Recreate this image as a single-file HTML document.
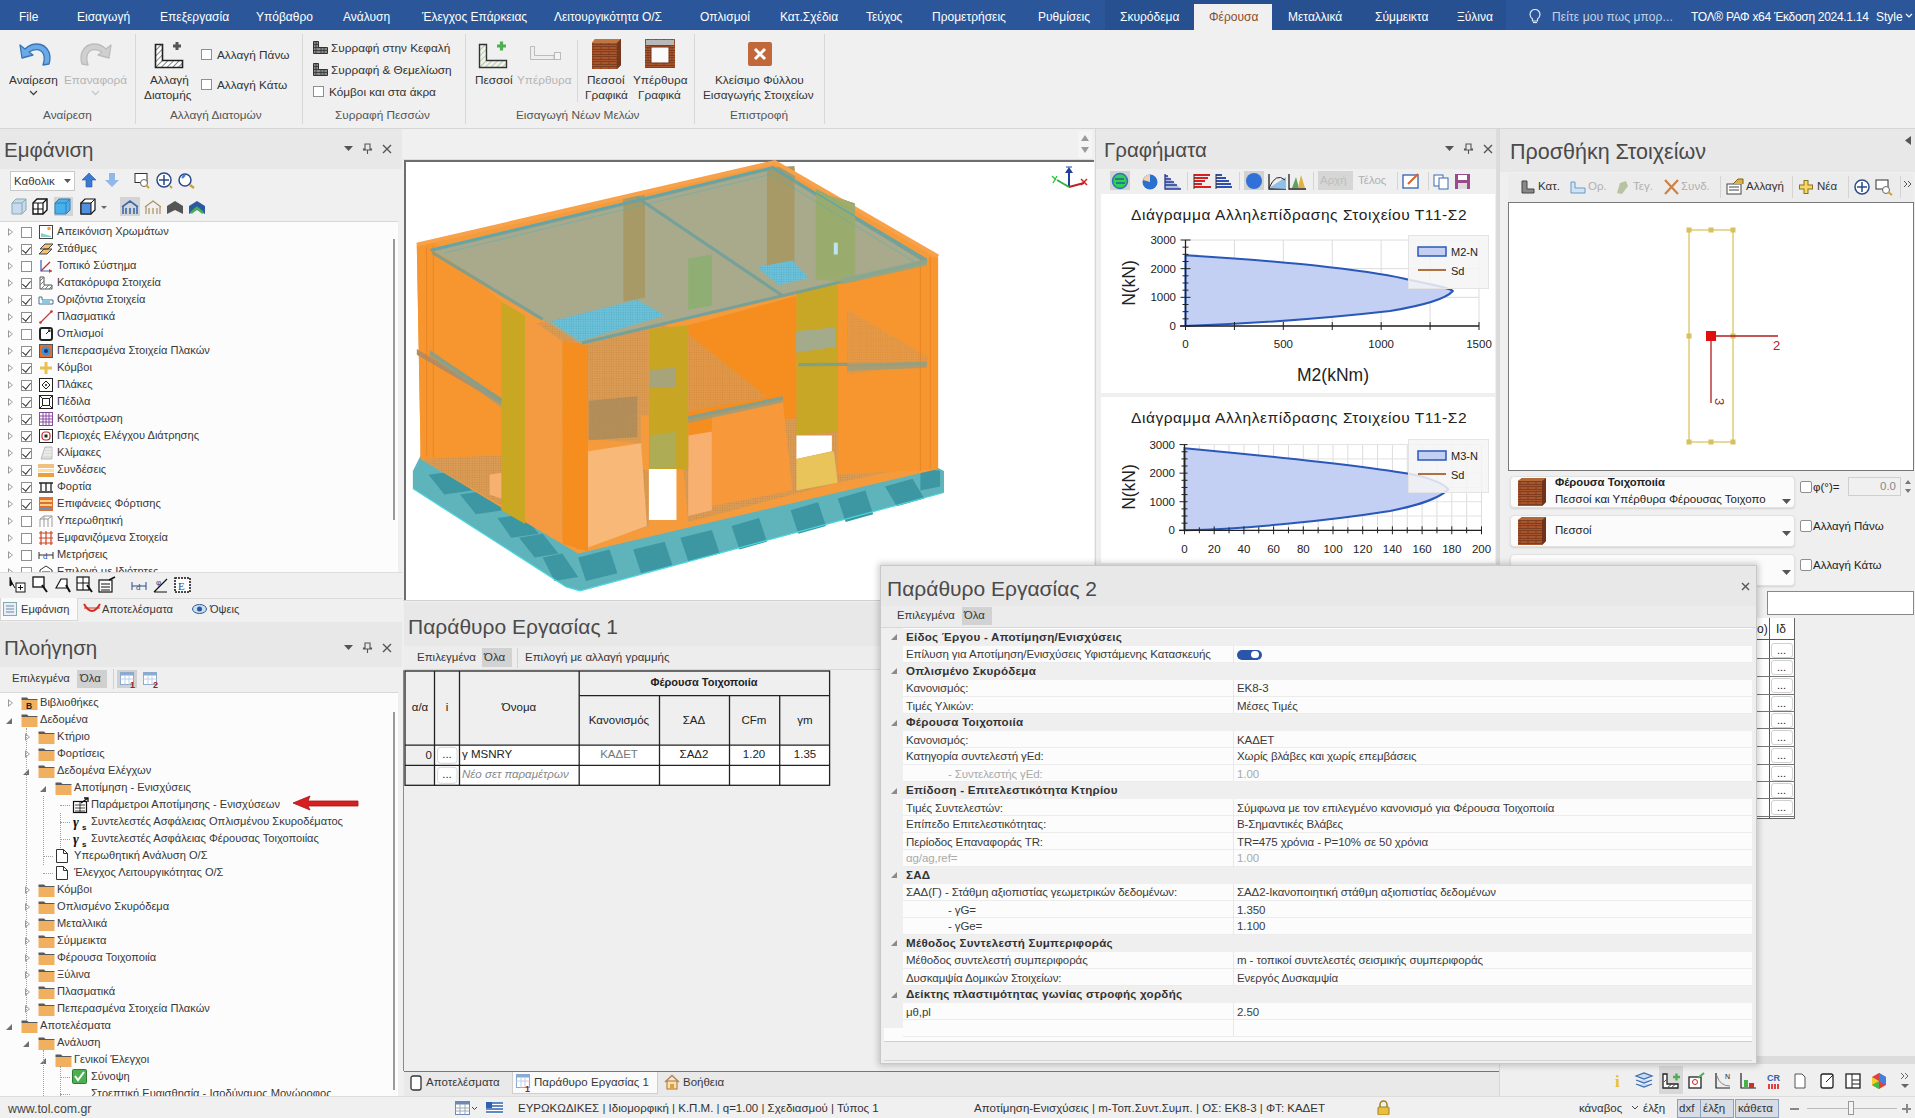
<!DOCTYPE html>
<html><head><meta charset="utf-8"><title>TOL</title>
<style>
*{margin:0;padding:0;box-sizing:border-box}
html,body{width:1915px;height:1118px;overflow:hidden;background:#f0f0f0;font-family:"Liberation Sans",sans-serif;color:#222;font-size:11px;position:relative}
.a{position:absolute}
.t{position:absolute;white-space:nowrap;line-height:1}
.menu{color:#fff;font-size:12px}
.rib{font-size:11.8px;color:#333}
.ph{background:#e8e8e8}
.ptitle{font-size:20.5px;color:#4a4a4a}
.cb{position:absolute;width:11px;height:11px;border:1px solid #8f8f8f;background:#fff}
.sep{position:absolute;width:1px;background:#d8d8d8}
.exp{position:absolute;width:0;height:0;border-top:4px solid transparent;border-bottom:4px solid transparent;border-left:5px solid #9a9a9a}
.exp:after{content:"";position:absolute;left:-4px;top:-2.5px;border-top:2.5px solid transparent;border-bottom:2.5px solid transparent;border-left:3px solid #fff}
.expd{position:absolute;width:0;height:0;border-left:6px solid transparent;border-bottom:6px solid #707070}
.tr{font-size:11.1px;color:#383838}
.ck{position:absolute;width:11px;height:11px;border:1px solid #8f8f8f;background:#fff}
.ck.on:after{content:"";position:absolute;left:2px;top:0px;width:4px;height:7px;border-right:1.5px solid #333;border-bottom:1.5px solid #333;transform:rotate(40deg)}
.ico{position:absolute;width:16px;height:16px}
.hic{position:absolute;font-size:13px;color:#555}

</style></head><body>
<!-- blue menu bar -->
<div class="a" style="left:0;top:0;width:1915px;height:30px;background:#2b579a"></div>
<div class="a" style="left:1105px;top:0;width:401px;height:30px;background:#26508f"></div>
<div class="a" style="left:1194px;top:4px;width:78px;height:27px;background:#f0f0f0"></div>
<div class="t menu" style="left:19px;top:11px">File</div>
<div class="t menu" style="left:77px;top:11px">Εισαγωγή</div>
<div class="t menu" style="left:160px;top:11px">Επεξεργασία</div>
<div class="t menu" style="left:256px;top:11px">Υπόβαθρο</div>
<div class="t menu" style="left:343px;top:11px">Ανάλυση</div>
<div class="t menu" style="left:422px;top:11px">Έλεγχος Επάρκειας</div>
<div class="t menu" style="left:554px;top:11px">Λειτουργικότητα Ο/Σ</div>
<div class="t menu" style="left:700px;top:11px">Οπλισμοί</div>
<div class="t menu" style="left:780px;top:11px">Κατ.Σχέδια</div>
<div class="t menu" style="left:866px;top:11px">Τεύχος</div>
<div class="t menu" style="left:932px;top:11px">Προμετρήσεις</div>
<div class="t menu" style="left:1038px;top:11px">Ρυθμίσεις</div>
<div class="t menu" style="left:1120px;top:11px">Σκυρόδεμα</div>
<div class="t menu" style="left:1209px;top:11px;color:#8a4b2a">Φέρουσα</div>
<div class="t menu" style="left:1288px;top:11px">Μεταλλικά</div>
<div class="t menu" style="left:1375px;top:11px">Σύμμεικτα</div>
<div class="t menu" style="left:1457px;top:11px">Ξύλινα</div>
<div class="t menu" style="left:1552px;top:11px;color:#c5d2e6;letter-spacing:0.1px">Πείτε μου πως μπορ...</div>
<svg class="a" style="left:1529px;top:9px" width="12" height="15" viewBox="0 0 12 15"><path d="M3.5 10 Q1 8 1 5.5 A5 5 0 0 1 11 5.5 Q11 8 8.5 10 V12 H3.5Z" fill="none" stroke="#dfe6f0" stroke-width="1.2"/><path d="M4 13.5 H8" stroke="#dfe6f0" stroke-width="1.2"/></svg>
<svg class="a" style="left:1905px;top:13px" width="8" height="6"><path d="M1 1 L4 4 L7 1" stroke="#fff" fill="none" stroke-width="1.2"/></svg>
<div class="t menu" style="left:1691px;top:11px;letter-spacing:-0.3px">ΤΟΛ® ΡΑΦ x64 Έκδοση 2024.1.14</div>
<div class="t menu" style="left:1876px;top:11px">Style</div>
<!-- ribbon -->
<div class="a" style="left:0;top:128px;width:1915px;height:1px;background:#d5d5d5"></div>
<div class="sep" style="left:135px;top:34px;height:90px"></div>
<div class="sep" style="left:302px;top:34px;height:90px"></div>
<div class="sep" style="left:465px;top:34px;height:90px"></div>
<div class="sep" style="left:577px;top:40px;height:62px"></div>
<div class="sep" style="left:694px;top:34px;height:90px"></div>
<div class="sep" style="left:824px;top:34px;height:90px"></div>
<!-- undo -->
<svg class="a" style="left:18px;top:42px" width="33" height="25" viewBox="0 0 33 25"><path d="M2 3 L4 16 L15 13 L11 10 Q18 6 23 9 Q27 12 26 19 L25 23 L31 22 Q33 16 31 10 Q27 2 19 2 Q12 2 7 7 Z" fill="#6aaae6" stroke="#3a74b8" stroke-width="1.3" stroke-linejoin="round"/></svg>
<svg class="a" style="left:80px;top:42px" width="33" height="25" viewBox="0 0 33 25"><path d="M31 3 L29 16 L18 13 L22 10 Q15 6 10 9 Q6 12 7 19 L8 23 L2 22 Q0 16 2 10 Q6 2 14 2 Q21 2 26 7 Z" fill="#d0d0d0" stroke="#bcbcbc" stroke-width="1.3" stroke-linejoin="round"/></svg>
<div class="t rib" style="left:9px;top:75px">Αναίρεση</div>
<div class="t rib" style="left:64px;top:75px;color:#b4b4b4">Επαναφορά</div>
<svg class="a" style="left:29px;top:90px" width="9" height="6"><path d="M1 1 L4.5 4.5 L8 1" stroke="#444" fill="none" stroke-width="1.3"/></svg>
<svg class="a" style="left:91px;top:90px" width="9" height="6"><path d="M1 1 L4.5 4.5 L8 1" stroke="#c8c8c8" fill="none" stroke-width="1.3"/></svg>
<div class="t rib" style="left:43px;top:110px;color:#555">Αναίρεση</div>
<!-- Αλλαγή Διατομής -->
<svg class="a" style="left:154px;top:40px" width="30" height="29" viewBox="0 0 30 29"><defs><pattern id="hat" width="4" height="4" patternUnits="userSpaceOnUse" patternTransform="rotate(45)"><rect width="4" height="4" fill="#fff"/><line x1="0" y1="0" x2="0" y2="4" stroke="#444" stroke-width="1.3"/></pattern></defs><path d="M1.5 4.5 H8.5 V20.5 H28.5 V27.5 H1.5 Z" fill="url(#hat)" stroke="#222" stroke-width="1.6"/><path d="M19 6 H27 M23 2 V10" stroke="#555" stroke-width="3"/></svg>
<div class="t rib" style="left:150px;top:75px">Αλλαγή</div>
<div class="t rib" style="left:144px;top:90px">Διατομής</div>
<div class="cb" style="left:201px;top:49px"></div>
<div class="t rib" style="left:217px;top:50px">Αλλαγή Πάνω</div>
<div class="cb" style="left:201px;top:79px"></div>
<div class="t rib" style="left:217px;top:80px">Αλλαγή Κάτω</div>
<div class="t rib" style="left:170px;top:110px;color:#555">Αλλαγή Διατομών</div>
<!-- Συρραφή -->
<svg class="a" style="left:313px;top:41px" width="15" height="13" viewBox="0 0 15 13"><path d="M0.5 0.5 H5.5 V6.5 H14.5 V12.5 H0.5 Z" fill="#8a8a8a" stroke="#333"/><path d="M0.5 3.5 H5.5 M0.5 6.5 H5.5 M0.5 9.5 H14.5 M3 0.5 V12.5 M8 6.5 V12.5 M11 6.5 V12.5" stroke="#333" stroke-width="0.8"/></svg>
<svg class="a" style="left:313px;top:63px" width="15" height="13" viewBox="0 0 15 13"><path d="M0.5 0.5 H5.5 V6.5 H14.5 V12.5 H0.5 Z" fill="#8a8a8a" stroke="#333"/><path d="M0.5 3.5 H5.5 M0.5 6.5 H5.5 M0.5 9.5 H14.5 M3 0.5 V12.5 M8 6.5 V12.5 M11 6.5 V12.5" stroke="#333" stroke-width="0.8"/></svg>
<div class="t rib" style="left:331px;top:43px">Συρραφή στην Κεφαλή</div>
<div class="t rib" style="left:331px;top:65px">Συρραφή &amp; Θεμελίωση</div>
<div class="cb" style="left:313px;top:86px"></div>
<div class="t rib" style="left:329px;top:87px">Κόμβοι και στα άκρα</div>
<div class="t rib" style="left:335px;top:110px;color:#555">Συρραφή Πεσσών</div>
<!-- Πεσσοί -->
<svg class="a" style="left:478px;top:40px" width="30" height="29" viewBox="0 0 30 29"><defs><pattern id="hatg" width="4" height="4" patternUnits="userSpaceOnUse" patternTransform="rotate(45)"><rect width="4" height="4" fill="#eef3ea"/><line x1="0" y1="0" x2="0" y2="4" stroke="#9ab58a" stroke-width="1.3"/></pattern></defs><path d="M1.5 4.5 H8.5 V20.5 H28.5 V27.5 H1.5 Z" fill="url(#hatg)" stroke="#333" stroke-width="1.4"/><path d="M19 6 H28 M23.5 1.5 V10.5" stroke="#4caf50" stroke-width="3.2"/></svg>
<svg class="a" style="left:530px;top:46px" width="31" height="15" viewBox="0 0 31 15"><path d="M0.5 0.5 H4.5 V9.5 H24 V13.5 H0.5 Z" fill="#eee" stroke="#bbb"/><rect x="24.5" y="6.5" width="6" height="7" fill="#f4f4f4" stroke="#bbb"/></svg>
<div class="t rib" style="left:475px;top:75px">Πεσσοί</div>
<div class="t rib" style="left:517px;top:75px;color:#b4b4b4">Υπέρθυρα</div>
<div class="t rib" style="left:516px;top:110px;color:#555">Εισαγωγή Νέων Μελών</div>
<!-- brick icons -->
<svg class="a" style="left:589px;top:37px" width="34" height="33" viewBox="0 0 34 33"><defs><pattern id="brk" width="8" height="5" patternUnits="userSpaceOnUse"><rect width="8" height="5" fill="#a8552e"/><path d="M0 4.5 H8 M4 0 V2.5 M0 2.5 H8" stroke="#6e3318" stroke-width="0.7"/></pattern></defs><path d="M3 6 L6 2 L32 2 L32 28 L28 32 L3 32 Z" fill="#8c4a25"/><rect x="3" y="6" width="25" height="26" fill="url(#brk)"/><path d="M3 6 L6 2 H32 L28 6 Z" fill="#c0763f"/><path d="M28 6 L32 2 V28 L28 32 Z" fill="#74391c"/></svg>
<div class="t rib" style="left:587px;top:75px">Πεσσοί</div>
<div class="t rib" style="left:585px;top:90px">Γραφικά</div>
<svg class="a" style="left:644px;top:38px" width="32" height="31" viewBox="0 0 32 31"><rect x="1" y="1" width="30" height="29" fill="#a8552e"/><rect x="1" y="1" width="30" height="29" fill="url(#brk)"/><rect x="2" y="2" width="28" height="5" fill="#b8b8b8"/><rect x="7" y="9" width="18" height="16" fill="#fafafa" stroke="#6e3318"/></svg>
<div class="t rib" style="left:633px;top:75px">Υπέρθυρα</div>
<div class="t rib" style="left:638px;top:90px">Γραφικά</div>
<!-- close sheet -->
<svg class="a" style="left:748px;top:42px" width="24" height="24" viewBox="0 0 24 24"><rect x="0" y="0" width="24" height="24" rx="2" fill="#c0683a"/><path d="M7 7 L17 17 M17 7 L7 17" stroke="#fff" stroke-width="3"/></svg>
<div class="t rib" style="left:715px;top:75px">Κλείσιμο Φύλλου</div>
<div class="t rib" style="left:703px;top:90px">Εισαγωγής Στοιχείων</div>
<div class="t rib" style="left:730px;top:110px;color:#555">Επιστροφή</div>
<!-- left panel Εμφάνιση -->
<div class="a ph" style="left:0;top:129px;width:402px;height:40px"></div>
<div class="t ptitle" style="left:4px;top:140px">Εμφάνιση</div>
<svg class="a" style="left:344px;top:143px" width="50" height="12" viewBox="0 0 50 12"><path d="M0 3 H9 L4.5 8Z" fill="#555"/><path d="M21 1 H26 V6 H27.5 V7 H19.5 V6 H21Z M23.5 7 V11" stroke="#555" fill="none" stroke-width="1.1"/><path d="M39 2 L47 10 M47 2 L39 10" stroke="#555" stroke-width="1.4"/></svg>
<div class="a" style="left:10px;top:171px;width:65px;height:20px;background:#fff;border:1px solid #c8c8c8"></div>
<div class="t tr" style="left:14px;top:176px;font-size:11.5px">Καθολικ</div>
<svg class="a" style="left:64px;top:179px" width="7" height="4"><path d="M0 0 H7 L3.5 4Z" fill="#555"/></svg>
<svg class="a" style="left:81px;top:172px" width="118" height="18" viewBox="0 0 118 18"><path d="M8 1 L15 8 H11 V15 H5 V8 H1Z" fill="#3a7ad0" stroke="#2a5aa0" stroke-width="0.6"/><path d="M31 15 L38 8 H34 V1 H28 V8 H24Z" fill="#90b8e8"/><rect x="54" y="1.5" width="12" height="9" fill="#fff" stroke="#333"/><circle cx="63" cy="11" r="3.5" fill="#fff" stroke="#666"/><path d="M65 13 L68 16" stroke="#c8a040" stroke-width="2"/><circle cx="83" cy="8" r="7" fill="#fff" stroke="#2a4a8a" stroke-width="1.5"/><path d="M83 3 V13 M78 8 H88" stroke="#2a4a8a" stroke-width="1.5"/><path d="M89 14 L91 16" stroke="#c8a040" stroke-width="2"/><circle cx="104" cy="8" r="6" fill="#fff" stroke="#2a4a8a" stroke-width="1.5"/><path d="M101 6 l3 -3" stroke="#3a7ad0" stroke-width="2"/><path d="M109 13 L113 16" stroke="#c8a040" stroke-width="2.5"/></svg>
<div class="a" style="left:54px;top:197px;width:19px;height:19px;background:#d4d4d4"></div>
<div class="a" style="left:120px;top:197px;width:20px;height:19px;background:#d4d4d4"></div>
<svg class="a" style="left:10px;top:198px" width="196" height="18" viewBox="0 0 196 18"><path d="M2 5 L6 1 H16 V12 L12 16 H2Z" fill="#c8daf0" stroke="#8aa"/><path d="M2 5 H12 V16 M12 5 L16 1" stroke="#8aa" fill="none"/><path d="M23 5 L27 1 H37 V12 L33 16 H23Z" fill="#fff" stroke="#111" stroke-width="1.4"/><path d="M23 5 H33 V16 M33 5 L37 1 M23 11 H33 M28 5 V16" stroke="#111" fill="none" stroke-width="1.2"/><path d="M45 5 L49 1 H60 V12 L56 16 H45Z" fill="#4ab0e8" stroke="#2a80c0"/><path d="M45 5 H56 V16 M56 5 L60 1" stroke="#2a80c0" fill="none"/><path d="M71 5 L75 1 H85 V12 L81 16 H71Z" fill="#fff" stroke="#111" stroke-width="1.2"/><rect x="71" y="5" width="10" height="11" fill="#5090e0" stroke="#111"/><path d="M81 5 L85 1" stroke="#111"/><path d="M91 8 H97 L94 11Z" fill="#666"/><path d="M112 9 L120 3 L128 9 M113 9 V16 M127 9 V16 M116 10 V16 M120 10 V16 M124 10 V16" stroke="#3a6ab0" stroke-width="1.6" fill="none"/><path d="M135 9 L143 3 L151 9 M136 9 V16 M150 9 V16 M139 10 V16 M143 10 V16 M147 10 V16" stroke="#b09060" stroke-width="1.2" fill="none"/><path d="M157 8 L165 3 L173 8 V16 L165 12 L157 16Z" fill="#555"/><path d="M179 8 L187 3 L195 8 V16 L187 12 L179 16Z" fill="#2a5aa0"/><path d="M181 15 L187 10 L193 15" stroke="#4caf50" stroke-width="2.5" fill="none"/></svg>
<div class="a" style="left:0;top:221px;width:398px;height:351px;background:#fcfcfc;border-top:1px solid #d8d8d8"></div>
<div class="a" style="left:393px;top:239px;width:2px;height:281px;background:#9a9a9a"></div>
<div class="exp" style="left:8px;top:228px"></div>
<div class="ck" style="left:21px;top:227px"></div>
<svg class="ico" style="left:38px;top:224px" viewBox="0 0 16 16"><rect x="1.5" y="1.5" width="13" height="13" fill="#fff" stroke="#444"/><path d="M3 13 V9 L6 10 L9 11 L13 12 V13Z" fill="#8cc"/><circle cx="11" cy="4.5" r="1.8" fill="#f0a040"/></svg>
<div class="t tr" style="left:57px;top:226px">Απεικόνιση Χρωμάτων</div>
<div class="exp" style="left:8px;top:245px"></div>
<div class="ck on" style="left:21px;top:244px"></div>
<svg class="ico" style="left:38px;top:241px" viewBox="0 0 16 16"><path d="M2 8 L7 3 H15 L10 8Z M1 13 L6 8 H14 L9 13Z" fill="#f5c070" stroke="#444"/></svg>
<div class="t tr" style="left:57px;top:243px">Στάθμες</div>
<div class="exp" style="left:8px;top:262px"></div>
<div class="ck" style="left:21px;top:261px"></div>
<svg class="ico" style="left:38px;top:258px" viewBox="0 0 16 16"><path d="M3 2 V13 H14" stroke="#3060c0" fill="none" stroke-width="1.2"/><path d="M3 13 L12 4" stroke="#c03030" stroke-width="1.2"/><path d="M14 13 l-3 -2 v4z" fill="#d33"/></svg>
<div class="t tr" style="left:57px;top:260px">Τοπικό Σύστημα</div>
<div class="exp" style="left:8px;top:279px"></div>
<div class="ck on" style="left:21px;top:278px"></div>
<svg class="ico" style="left:38px;top:275px" viewBox="0 0 16 16"><path d="M2 2 H6 V10 H14 V14 H2Z" fill="#fff" stroke="#555"/><path d="M2 6 L6 2 M2 10 L6 6 M3 14 L7 10 M7 14 L11 10 M11 14 L14 11" stroke="#777"/></svg>
<div class="t tr" style="left:57px;top:277px">Κατακόρυφα Στοιχεία</div>
<div class="exp" style="left:8px;top:296px"></div>
<div class="ck on" style="left:21px;top:295px"></div>
<svg class="ico" style="left:38px;top:292px" viewBox="0 0 16 16"><path d="M1 5 V12 H15 V8 H4 V5Z" fill="#fff" stroke="#4a7090"/><rect x="4" y="8" width="8" height="3" fill="#8cc8e0"/></svg>
<div class="t tr" style="left:57px;top:294px">Οριζόντια Στοιχεία</div>
<div class="exp" style="left:8px;top:313px"></div>
<div class="ck on" style="left:21px;top:312px"></div>
<svg class="ico" style="left:38px;top:309px" viewBox="0 0 16 16"><path d="M2 14 L14 2" stroke="#c04040" stroke-width="1.2"/><circle cx="2.5" cy="13.5" r="1.3" fill="#c33"/><circle cx="13.5" cy="2.5" r="1.3" fill="#c33"/></svg>
<div class="t tr" style="left:57px;top:311px">Πλασματικά</div>
<div class="exp" style="left:8px;top:330px"></div>
<div class="ck" style="left:21px;top:329px"></div>
<svg class="ico" style="left:38px;top:326px" viewBox="0 0 16 16"><rect x="2" y="2" width="12" height="12" rx="2" fill="#fff" stroke="#222" stroke-width="2"/><path d="M8 8 L12 4 M10 4 H12 V6" stroke="#222"/></svg>
<div class="t tr" style="left:57px;top:328px">Οπλισμοί</div>
<div class="exp" style="left:8px;top:347px"></div>
<div class="ck on" style="left:21px;top:346px"></div>
<svg class="ico" style="left:38px;top:343px" viewBox="0 0 16 16"><rect x="1.5" y="1.5" width="13" height="13" fill="#e07030" stroke="#555"/><circle cx="8" cy="8" r="4.5" fill="#4090d0"/><circle cx="8" cy="8" r="2" fill="#203080"/></svg>
<div class="t tr" style="left:57px;top:345px">Πεπερασμένα Στοιχεία Πλακών</div>
<div class="exp" style="left:8px;top:364px"></div>
<div class="ck on" style="left:21px;top:363px"></div>
<svg class="ico" style="left:38px;top:360px" viewBox="0 0 16 16"><path d="M8 2 V14 M2 8 H14" stroke="#e8c050" stroke-width="3"/></svg>
<div class="t tr" style="left:57px;top:362px">Κόμβοι</div>
<div class="exp" style="left:8px;top:381px"></div>
<div class="ck on" style="left:21px;top:380px"></div>
<svg class="ico" style="left:38px;top:377px" viewBox="0 0 16 16"><rect x="1.5" y="1.5" width="13" height="13" fill="#fff" stroke="#222"/><path d="M8 4 L12 8 L8 12 L4 8Z" fill="none" stroke="#222"/><circle cx="8" cy="8" r="1" fill="#222"/></svg>
<div class="t tr" style="left:57px;top:379px">Πλάκες</div>
<div class="exp" style="left:8px;top:398px"></div>
<div class="ck on" style="left:21px;top:397px"></div>
<svg class="ico" style="left:38px;top:394px" viewBox="0 0 16 16"><rect x="1.5" y="1.5" width="13" height="13" fill="#fff" stroke="#222"/><rect x="4.5" y="4.5" width="7" height="7" fill="none" stroke="#222"/><path d="M2 2 L5 5 M14 2 L11 5 M2 14 L5 11 M14 14 L11 11" stroke="#222"/></svg>
<div class="t tr" style="left:57px;top:396px">Πέδιλα</div>
<div class="exp" style="left:8px;top:415px"></div>
<div class="ck on" style="left:21px;top:414px"></div>
<svg class="ico" style="left:38px;top:411px" viewBox="0 0 16 16"><rect x="1.5" y="1.5" width="13" height="13" fill="#fff" stroke="#8a4aa0"/><path d="M5 1.5 V14.5 M8 1.5 V14.5 M11 1.5 V14.5 M1.5 5 H14.5 M1.5 8 H14.5 M1.5 11 H14.5" stroke="#8a4aa0"/></svg>
<div class="t tr" style="left:57px;top:413px">Κοιτόστρωση</div>
<div class="exp" style="left:8px;top:432px"></div>
<div class="ck on" style="left:21px;top:431px"></div>
<svg class="ico" style="left:38px;top:428px" viewBox="0 0 16 16"><rect x="1.5" y="1.5" width="13" height="13" fill="#fff" stroke="#222"/><rect x="4" y="4" width="8" height="8" rx="3" fill="none" stroke="#c03030" stroke-width="1.2"/><rect x="6.5" y="6.5" width="3" height="3" fill="#222"/></svg>
<div class="t tr" style="left:57px;top:430px">Περιοχές Ελέγχου Διάτρησης</div>
<div class="exp" style="left:8px;top:449px"></div>
<div class="ck on" style="left:21px;top:448px"></div>
<svg class="ico" style="left:38px;top:445px" viewBox="0 0 16 16"><path d="M3 14 L7 2 H14 V14Z" fill="#ddd" stroke="#bbb"/><path d="M5 10 H14 M6 7 H14 M7 4 H14" stroke="#f4f4f4"/></svg>
<div class="t tr" style="left:57px;top:447px">Κλίμακες</div>
<div class="exp" style="left:8px;top:466px"></div>
<div class="ck on" style="left:21px;top:465px"></div>
<svg class="ico" style="left:38px;top:462px" viewBox="0 0 16 16"><rect x="0" y="2" width="16" height="4" fill="#f0c080"/><rect x="0" y="7" width="16" height="3" fill="#ffe0a0"/><rect x="0" y="11" width="16" height="4" fill="#e8a040"/></svg>
<div class="t tr" style="left:57px;top:464px">Συνδέσεις</div>
<div class="exp" style="left:8px;top:483px"></div>
<div class="ck on" style="left:21px;top:482px"></div>
<svg class="ico" style="left:38px;top:479px" viewBox="0 0 16 16"><path d="M1 4 H15 M3 4 V12 M8 4 V12 M13 4 V12 M1 13 H15" stroke="#222" stroke-width="1.3"/></svg>
<div class="t tr" style="left:57px;top:481px">Φορτία</div>
<div class="exp" style="left:8px;top:500px"></div>
<div class="ck on" style="left:21px;top:499px"></div>
<svg class="ico" style="left:38px;top:496px" viewBox="0 0 16 16"><rect x="1" y="1" width="14" height="14" fill="#e07030"/><rect x="2" y="4" width="12" height="2" fill="#ffd080"/><rect x="2" y="8" width="12" height="2" fill="#ffd080"/><rect x="2" y="12" width="12" height="2" fill="#7090c0"/></svg>
<div class="t tr" style="left:57px;top:498px">Επιφάνειες Φόρτισης</div>
<div class="exp" style="left:8px;top:517px"></div>
<div class="ck" style="left:21px;top:516px"></div>
<svg class="ico" style="left:38px;top:513px" viewBox="0 0 16 16"><path d="M2 6 L6 3 H14 L14 14 M6 3 V14 M2 6 V14 M10 6 V14 M2 6 H10 L14 3" stroke="#999" fill="none"/></svg>
<div class="t tr" style="left:57px;top:515px">Υπερωθητική</div>
<div class="exp" style="left:8px;top:534px"></div>
<div class="ck" style="left:21px;top:533px"></div>
<svg class="ico" style="left:38px;top:530px" viewBox="0 0 16 16"><path d="M3 1 V15 M8 1 V15 M13 1 V15 M1 3 H15 M1 8 H15 M1 13 H15" stroke="#d04020" stroke-width="1.2"/></svg>
<div class="t tr" style="left:57px;top:532px">Εμφανιζόμενα Στοιχεία</div>
<div class="exp" style="left:8px;top:551px"></div>
<div class="ck" style="left:21px;top:550px"></div>
<svg class="ico" style="left:38px;top:547px" viewBox="0 0 16 16"><path d="M1 5 V12 M15 5 V12 M1 8 H15" stroke="#333"/><text x="5" y="12" font-size="9" fill="#2050a0" font-family="Liberation Serif">d</text></svg>
<div class="t tr" style="left:57px;top:549px">Μετρήσεις</div>
<div class="exp" style="left:8px;top:568px"></div>
<div class="ck" style="left:21px;top:567px"></div>
<svg class="ico" style="left:38px;top:564px" viewBox="0 0 16 16"><path d="M2 14 V6 L8 2 L14 6 V14Z" fill="#fff" stroke="#333"/><path d="M4 8 H12 M4 11 H12" stroke="#333"/></svg>
<div class="t tr" style="left:57px;top:566px">Επιλογή με Ιδιότητες</div>
<div class="a" style="left:0;top:572px;width:402px;height:26px;background:#f0f0f0;border-top:1px solid #dcdcdc"></div>
<svg class="a" style="left:9px;top:576px" width="185" height="18" viewBox="0 0 185 18"><path d="M1 1 L1 10 L3.5 8 L6 12" stroke="#111" fill="#111"/><rect x="7" y="7" width="9" height="9" fill="#fff" stroke="#111"/><path d="M11.5 9 V14 M9 11.5 H14" stroke="#111"/><rect x="24" y="1" width="11" height="10" fill="#fff" stroke="#111" stroke-width="1.3"/><path d="M33 9 L38 16" stroke="#111" stroke-width="2"/><path d="M47 12 L52 3 H58 V12Z" fill="#fff" stroke="#111" stroke-width="1.2"/><path d="M57 9 L61 16" stroke="#111" stroke-width="2"/><rect x="68" y="1" width="12" height="13" fill="#fff" stroke="#111" stroke-width="1.2"/><path d="M74 1 V14 M68 7 H80" stroke="#111"/><path d="M78 9 L83 16" stroke="#111" stroke-width="2"/><rect x="90" y="4" width="13" height="12" fill="#fff" stroke="#111" stroke-width="1.2"/><path d="M92 8 H101 M92 11 H101 M92 14 H101" stroke="#111"/><path d="M100 4 L106 1" stroke="#111" stroke-width="1.5"/><path d="M123 6 V14 M137 6 V14 M123 10 H137" stroke="#2a4a8a"/><text x="127" y="14" font-size="9" fill="#2a4a8a" font-family="Liberation Serif">d</text><path d="M145 16 L158 3 M145 16 H158" stroke="#111" stroke-width="1.2"/><text x="147" y="9" font-size="8" fill="#2a4a8a">φ</text><rect x="166" y="2" width="15" height="14" fill="#fff" stroke="#111" stroke-width="1.5" stroke-dasharray="2 1"/><text x="169" y="14" font-size="11" fill="#2a4a8a" font-family="Liberation Serif">E</text></svg>
<div class="a" style="left:0;top:598px;width:402px;height:24px;background:#f0f0f0;border-top:1px solid #dadada"></div>
<div class="a" style="left:0;top:598px;width:78px;height:23px;background:#fafafa;border:1px solid #d8d8d8;border-top:none"></div>
<svg class="a" style="left:3px;top:602px" width="14" height="14" viewBox="0 0 14 14"><rect x="0.5" y="0.5" width="13" height="13" fill="#e8eef6" stroke="#8aa"/><path d="M3 4 H11 M3 7 H11 M3 10 H11" stroke="#6a8ab0"/></svg>
<div class="t tr" style="left:21px;top:604px">Εμφάνιση</div>
<svg class="a" style="left:83px;top:602px" width="18" height="14" viewBox="0 0 18 14"><path d="M1 2 Q9 16 17 2" stroke="#d03020" stroke-width="2" fill="none"/><path d="M1 6 H17" stroke="#d03020" stroke-width="1"/></svg>
<div class="t tr" style="left:102px;top:604px">Αποτελέσματα</div>
<svg class="a" style="left:192px;top:603px" width="15" height="12" viewBox="0 0 15 12"><ellipse cx="7.5" cy="6" rx="7" ry="4.5" fill="#cde" stroke="#2a5a9a"/><circle cx="7.5" cy="6" r="2.5" fill="#2a5a9a"/></svg>
<div class="t tr" style="left:210px;top:604px">Όψεις</div><!-- Πλοήγηση -->
<div class="a ph" style="left:0;top:622px;width:402px;height:45px"></div>
<div class="t ptitle" style="left:4px;top:638px">Πλοήγηση</div>
<svg class="a" style="left:344px;top:642px" width="50" height="12" viewBox="0 0 50 12"><path d="M0 3 H9 L4.5 8Z" fill="#555"/><path d="M21 1 H26 V6 H27.5 V7 H19.5 V6 H21Z M23.5 7 V11" stroke="#555" fill="none" stroke-width="1.1"/><path d="M39 2 L47 10 M47 2 L39 10" stroke="#555" stroke-width="1.4"/></svg>
<div class="a" style="left:0;top:667px;width:402px;height:25px;background:#efefef"></div>
<div class="t tr" style="left:12px;top:673px;font-size:11.3px">Επιλεγμένα</div>
<div class="a" style="left:77px;top:670px;width:30px;height:18px;background:#d0d0d0"></div>
<div class="t tr" style="left:80px;top:673px;font-size:11.3px">Όλα</div>
<div class="a" style="left:113px;top:669px;width:1px;height:20px;background:#d0d0d0"></div>
<div class="a" style="left:117px;top:670px;width:20px;height:18px;background:#d0d0d0"></div>
<svg class="a" style="left:119px;top:671px" width="18" height="17" viewBox="0 0 18 17"><rect x="1.5" y="1.5" width="13" height="12" fill="#fff" stroke="#8aaad0"/><rect x="1.5" y="1.5" width="13" height="3" fill="#8aaad0"/><path d="M1.5 8 H14.5 M6 4.5 V13.5 M10 4.5 V13.5" stroke="#c0d0e8"/><text x="11" y="16.5" font-size="9" font-weight="bold" fill="#a02020">1</text></svg>
<svg class="a" style="left:142px;top:671px" width="18" height="17" viewBox="0 0 18 17"><rect x="1.5" y="1.5" width="13" height="12" fill="#fff" stroke="#8aaad0"/><rect x="1.5" y="1.5" width="13" height="3" fill="#8aaad0"/><path d="M1.5 8 H14.5 M6 4.5 V13.5 M10 4.5 V13.5" stroke="#c0d0e8"/><text x="11" y="16.5" font-size="9" font-weight="bold" fill="#a02020">2</text></svg>
<div class="a" style="left:0;top:692px;width:398px;height:404px;background:#fcfcfc;border-top:1px solid #d8d8d8"></div>
<div class="a" style="left:393px;top:712px;width:2px;height:378px;background:#9a9a9a"></div>
<div class="exp" style="left:8px;top:699px"></div>
<svg class="a" style="left:21px;top:696px" width="17" height="14" viewBox="0 0 17 14"><path d="M0.5 1.5 H6 L7.5 3 H16.5 V4 H0.5Z" fill="#5a5a5a"/><rect x="0.5" y="4" width="16" height="10" fill="#f0b060"/><text x="5" y="12.5" font-size="8.5" font-weight="bold" fill="#222">B</text></svg>
<div class="t tr" style="left:40px;top:697px">Βιβλιοθήκες</div>
<div class="expd" style="left:6px;top:718px"></div>
<svg class="a" style="left:21px;top:713px" width="17" height="14" viewBox="0 0 17 14"><path d="M0.5 1.5 H6 L7.5 3 H16.5 V4 H0.5Z" fill="#5a5a5a"/><rect x="0.5" y="4" width="16" height="10" fill="#f0b060"/></svg>
<div class="t tr" style="left:40px;top:714px">Δεδομένα</div>
<div class="exp" style="left:25px;top:733px"></div>
<svg class="a" style="left:38px;top:730px" width="17" height="14" viewBox="0 0 17 14"><path d="M0.5 1.5 H6 L7.5 3 H16.5 V4 H0.5Z" fill="#5a5a5a"/><rect x="0.5" y="4" width="16" height="10" fill="#f0b060"/></svg>
<div class="t tr" style="left:57px;top:731px">Κτήριο</div>
<div class="exp" style="left:25px;top:750px"></div>
<svg class="a" style="left:38px;top:747px" width="17" height="14" viewBox="0 0 17 14"><path d="M0.5 1.5 H6 L7.5 3 H16.5 V4 H0.5Z" fill="#5a5a5a"/><rect x="0.5" y="4" width="16" height="10" fill="#f0b060"/></svg>
<div class="t tr" style="left:57px;top:748px">Φορτίσεις</div>
<div class="expd" style="left:23px;top:769px"></div>
<svg class="a" style="left:38px;top:764px" width="17" height="14" viewBox="0 0 17 14"><path d="M0.5 1.5 H6 L7.5 3 H16.5 V4 H0.5Z" fill="#5a5a5a"/><rect x="0.5" y="4" width="16" height="10" fill="#f0b060"/></svg>
<div class="t tr" style="left:57px;top:765px">Δεδομένα Ελέγχων</div>
<div class="expd" style="left:40px;top:786px"></div>
<svg class="a" style="left:55px;top:781px" width="17" height="14" viewBox="0 0 17 14"><path d="M0.5 1.5 H6 L7.5 3 H16.5 V4 H0.5Z" fill="#5a5a5a"/><rect x="0.5" y="4" width="16" height="10" fill="#f0b060"/></svg>
<div class="t tr" style="left:74px;top:782px">Αποτίμηση - Ενισχύσεις</div>
<svg class="a" style="left:72px;top:797px" width="18" height="17" viewBox="0 0 18 17"><rect x="1.5" y="4.5" width="13" height="11" fill="#fff" stroke="#111" stroke-width="1.2"/><path d="M3 8 H13 M3 11 H13 M3 14 H13 M8 5 V15" stroke="#111" stroke-width="0.8"/><path d="M9 6 L16 1 M12 1 H16 V5" stroke="#111" stroke-width="1.3" fill="none"/></svg>
<div class="t tr" style="left:91px;top:799px">Παράμετροι Αποτίμησης - Ενισχύσεων</div>
<svg class="a" style="left:72px;top:814px" width="17" height="17" viewBox="0 0 17 17"><text x="1" y="13" font-size="14" font-weight="bold" font-style="italic" fill="#111" font-family="Liberation Serif">γ</text><text x="10" y="16" font-size="8" font-weight="bold" fill="#111">s</text></svg>
<div class="t tr" style="left:91px;top:816px">Συντελεστές Ασφάλειας Οπλισμένου Σκυροδέματος</div>
<svg class="a" style="left:72px;top:831px" width="17" height="17" viewBox="0 0 17 17"><text x="1" y="13" font-size="14" font-weight="bold" font-style="italic" fill="#111" font-family="Liberation Serif">γ</text><text x="10" y="16" font-size="8" font-weight="bold" fill="#111">s</text></svg>
<div class="t tr" style="left:91px;top:833px">Συντελεστές Ασφάλειας Φέρουσας Τοιχοποιίας</div>
<svg class="a" style="left:55px;top:848px" width="14" height="16" viewBox="0 0 14 16"><path d="M1.5 1.5 H8.5 L12.5 5.5 V14.5 H1.5Z M8.5 1.5 V5.5 H12.5" fill="#fff" stroke="#333"/></svg>
<div class="t tr" style="left:74px;top:850px">Υπερωθητική Ανάλυση Ο/Σ</div>
<svg class="a" style="left:55px;top:865px" width="14" height="16" viewBox="0 0 14 16"><path d="M1.5 1.5 H8.5 L12.5 5.5 V14.5 H1.5Z M8.5 1.5 V5.5 H12.5" fill="#fff" stroke="#333"/></svg>
<div class="t tr" style="left:74px;top:867px">Έλεγχος Λειτουργικότητας Ο/Σ</div>
<div class="exp" style="left:25px;top:886px"></div>
<svg class="a" style="left:38px;top:883px" width="17" height="14" viewBox="0 0 17 14"><path d="M0.5 1.5 H6 L7.5 3 H16.5 V4 H0.5Z" fill="#5a5a5a"/><rect x="0.5" y="4" width="16" height="10" fill="#f0b060"/></svg>
<div class="t tr" style="left:57px;top:884px">Κόμβοι</div>
<div class="exp" style="left:25px;top:903px"></div>
<svg class="a" style="left:38px;top:900px" width="17" height="14" viewBox="0 0 17 14"><path d="M0.5 1.5 H6 L7.5 3 H16.5 V4 H0.5Z" fill="#5a5a5a"/><rect x="0.5" y="4" width="16" height="10" fill="#f0b060"/></svg>
<div class="t tr" style="left:57px;top:901px">Οπλισμένο Σκυρόδεμα</div>
<div class="exp" style="left:25px;top:920px"></div>
<svg class="a" style="left:38px;top:917px" width="17" height="14" viewBox="0 0 17 14"><path d="M0.5 1.5 H6 L7.5 3 H16.5 V4 H0.5Z" fill="#5a5a5a"/><rect x="0.5" y="4" width="16" height="10" fill="#f0b060"/></svg>
<div class="t tr" style="left:57px;top:918px">Μεταλλικά</div>
<div class="exp" style="left:25px;top:937px"></div>
<svg class="a" style="left:38px;top:934px" width="17" height="14" viewBox="0 0 17 14"><path d="M0.5 1.5 H6 L7.5 3 H16.5 V4 H0.5Z" fill="#5a5a5a"/><rect x="0.5" y="4" width="16" height="10" fill="#f0b060"/></svg>
<div class="t tr" style="left:57px;top:935px">Σύμμεικτα</div>
<div class="exp" style="left:25px;top:954px"></div>
<svg class="a" style="left:38px;top:951px" width="17" height="14" viewBox="0 0 17 14"><path d="M0.5 1.5 H6 L7.5 3 H16.5 V4 H0.5Z" fill="#5a5a5a"/><rect x="0.5" y="4" width="16" height="10" fill="#f0b060"/></svg>
<div class="t tr" style="left:57px;top:952px">Φέρουσα Τοιχοποιία</div>
<div class="exp" style="left:25px;top:971px"></div>
<svg class="a" style="left:38px;top:968px" width="17" height="14" viewBox="0 0 17 14"><path d="M0.5 1.5 H6 L7.5 3 H16.5 V4 H0.5Z" fill="#5a5a5a"/><rect x="0.5" y="4" width="16" height="10" fill="#f0b060"/></svg>
<div class="t tr" style="left:57px;top:969px">Ξύλινα</div>
<div class="exp" style="left:25px;top:988px"></div>
<svg class="a" style="left:38px;top:985px" width="17" height="14" viewBox="0 0 17 14"><path d="M0.5 1.5 H6 L7.5 3 H16.5 V4 H0.5Z" fill="#5a5a5a"/><rect x="0.5" y="4" width="16" height="10" fill="#f0b060"/></svg>
<div class="t tr" style="left:57px;top:986px">Πλασματικά</div>
<div class="exp" style="left:25px;top:1005px"></div>
<svg class="a" style="left:38px;top:1002px" width="17" height="14" viewBox="0 0 17 14"><path d="M0.5 1.5 H6 L7.5 3 H16.5 V4 H0.5Z" fill="#5a5a5a"/><rect x="0.5" y="4" width="16" height="10" fill="#f0b060"/></svg>
<div class="t tr" style="left:57px;top:1003px">Πεπερασμένα Στοιχεία Πλακών</div>
<div class="expd" style="left:6px;top:1024px"></div>
<svg class="a" style="left:21px;top:1019px" width="17" height="14" viewBox="0 0 17 14"><path d="M0.5 1.5 H6 L7.5 3 H16.5 V4 H0.5Z" fill="#5a5a5a"/><rect x="0.5" y="4" width="16" height="10" fill="#f0b060"/></svg>
<div class="t tr" style="left:40px;top:1020px">Αποτελέσματα</div>
<div class="expd" style="left:23px;top:1041px"></div>
<svg class="a" style="left:38px;top:1036px" width="17" height="14" viewBox="0 0 17 14"><path d="M0.5 1.5 H6 L7.5 3 H16.5 V4 H0.5Z" fill="#5a5a5a"/><rect x="0.5" y="4" width="16" height="10" fill="#f0b060"/></svg>
<div class="t tr" style="left:57px;top:1037px">Ανάλυση</div>
<div class="expd" style="left:40px;top:1058px"></div>
<svg class="a" style="left:55px;top:1053px" width="17" height="14" viewBox="0 0 17 14"><path d="M0.5 1.5 H6 L7.5 3 H16.5 V4 H0.5Z" fill="#5a5a5a"/><rect x="0.5" y="4" width="16" height="10" fill="#f0b060"/></svg>
<div class="t tr" style="left:74px;top:1054px">Γενικοί Έλεγχοι</div>
<svg class="a" style="left:72px;top:1069px" width="15" height="15" viewBox="0 0 15 15"><rect x="0.5" y="0.5" width="14" height="14" rx="1" fill="#4caf50" stroke="#2e7d32"/><path d="M3 7 L6 11 L12 3" stroke="#fff" stroke-width="2" fill="none"/></svg>
<div class="t tr" style="left:91px;top:1071px">Σύνοψη</div>
<div class="t tr" style="left:91px;top:1088px">Στρεπτική Ευαισθησία - Ισοδύναμος Μονώροφος</div>
<div class="a" style="left:26px;top:728px;width:1px;height:292px;border-left:1px dotted #a0a0a0"></div>
<div class="a" style="left:43px;top:796px;width:1px;height:69px;border-left:1px dotted #a0a0a0"></div>
<div class="a" style="left:60px;top:813px;width:1px;height:35px;border-left:1px dotted #a0a0a0"></div>
<div class="a" style="left:43px;top:1050px;width:1px;height:46px;border-left:1px dotted #a0a0a0"></div>
<div class="a" style="left:60px;top:1066px;width:1px;height:30px;border-left:1px dotted #a0a0a0"></div>
<div class="a" style="left:60px;top:805px;width:10px;height:1px;border-top:1px dotted #a0a0a0"></div>
<div class="a" style="left:60px;top:822px;width:10px;height:1px;border-top:1px dotted #a0a0a0"></div>
<div class="a" style="left:60px;top:839px;width:10px;height:1px;border-top:1px dotted #a0a0a0"></div>
<div class="a" style="left:43px;top:856px;width:10px;height:1px;border-top:1px dotted #a0a0a0"></div>
<div class="a" style="left:43px;top:873px;width:10px;height:1px;border-top:1px dotted #a0a0a0"></div>
<div class="a" style="left:60px;top:1077px;width:10px;height:1px;border-top:1px dotted #a0a0a0"></div>
<div class="a" style="left:60px;top:1094px;width:10px;height:1px;border-top:1px dotted #a0a0a0"></div>
<svg class="a" style="left:290px;top:794px" width="72" height="18" viewBox="0 0 72 18"><path d="M3 9 L20 2 L18 7 L68 7 V12 L18 12 L20 16Z" fill="#d42020" stroke="#b01010" stroke-width="0.8"/></svg>
<div class="a" style="left:0;top:1096px;width:402px;height:2px;background:#e0e0e0"></div><!-- 3D view -->
<div class="a" style="left:403px;top:129px;width:692px;height:31px;background:#f0f0f0"></div>
<div class="a" style="left:403px;top:129px;width:690px;height:31px;border-bottom:1px solid #dcdcdc"></div>
<div class="a" style="left:1078px;top:131px;width:14px;height:27px;background:#f5f5f5"></div>
<svg class="a" style="left:1080px;top:133px" width="10" height="22"><path d="M1 8 L5 2 L9 8Z M1 14 L5 20 L9 14Z" fill="#9a9a9a"/></svg>
<div class="a" style="left:404px;top:160px;width:690px;height:440px;background:#fff;border-left:2px solid #6e6e6e;border-top:2px solid #6e6e6e"></div>
<svg class="a" style="left:1049px;top:165px" width="40" height="28" viewBox="0 0 40 28"><path d="M20 22 V4" stroke="#2040a0" stroke-width="2"/><path d="M16 8 L20 2 L24 8Z" fill="#2040a0"/><path d="M17 2 H23" stroke="#2040a0"/><path d="M20 22 L35 18" stroke="#c02020" stroke-width="2"/><path d="M32 14 L38 20 M38 14 L32 20" stroke="#d02020" stroke-width="1.5"/><path d="M20 22 L8 15" stroke="#30b040" stroke-width="2"/><path d="M3 11 L7 15 M8 11 L4 18" stroke="#30c040" stroke-width="1.3"/></svg>
<svg class="a" style="left:405px;top:160px" width="550" height="440" viewBox="0 0 1398 1118">
<defs>
<pattern id="mesh" width="6" height="6" patternUnits="userSpaceOnUse"><rect width="6" height="6" fill="#d99b55"/><circle cx="3" cy="3" r="1.3" fill="#c8873f"/></pattern>
<pattern id="meshb" width="6" height="6" patternUnits="userSpaceOnUse"><rect width="6" height="6" fill="#6cc0d8"/><circle cx="3" cy="3" r="1.3" fill="#4aa8c0"/></pattern>
</defs>
<!-- foundation -->
<polygon points="20,790 20,835 410,1085 445,1095 1370,845 1370,790 1330,770 40,750" fill="#5fb3ba"/>
<g fill="#3d97a3">
<polygon points="60,800 130,790 170,840 100,850"/><polygon points="140,850 210,840 250,890 180,900"/><polygon points="235,910 300,900 340,950 270,960"/>
<polygon points="290,960 350,950 390,1000 330,1010"/><polygon points="350,1010 400,1000 440,1060 380,1070"/>
<polygon points="440,1010 520,990 540,1050 460,1070"/><polygon points="580,990 660,970 680,1030 600,1050"/>
<polygon points="700,960 780,940 800,1000 720,1020"/><polygon points="830,930 900,910 920,970 850,990"/>
<polygon points="980,890 1050,870 1070,930 1000,950"/><polygon points="1100,860 1170,840 1190,900 1120,920"/>
<polygon points="1220,830 1290,810 1320,860 1250,880"/><polygon points="1310,780 1360,790 1360,830 1310,840"/>
</g>
<path d="M20 835 L410 1085 L445 1095 L1370 845" stroke="#4ad8e0" stroke-width="3" fill="none"/>
<!-- building mass -->
<polygon points="30,215 940,5 1355,245 1355,785 440,1000 40,760" fill="#f59b3c"/>
<!-- mesh floors -->
<polygon points="40,735 250,700 620,790 620,930 440,990 40,760" fill="url(#mesh)"/>
<polygon points="700,690 990,610 1340,770 1100,820 720,920" fill="url(#mesh)"/>
<polygon points="65,480 560,360 970,600 720,660 250,615" fill="url(#mesh)" opacity="0.9"/>
<polygon points="990,420 1330,500 1330,520 1000,600" fill="url(#mesh)" opacity="0.9"/>
<polygon points="350,420 600,380 600,720 350,700" fill="url(#mesh)" opacity="0.85"/>
<!-- peach interiors -->
<polygon points="465,740 600,720 615,930 465,985" fill="#f8b878"/>
<polygon points="215,800 300,785 300,880 215,850" fill="#f6b070"/>
<polygon points="720,690 780,680 780,890 720,905" fill="#f8b070"/>
<!-- walls -->
<polygon points="30,215 75,210 245,360 245,750 40,760" fill="#f7962f"/>
<polygon points="30,480 245,610 245,620 30,495" fill="#b88a60"/>
<polygon points="1100,300 1355,245 1355,785 1100,800" fill="#f7962f"/>
<polygon points="720,420 995,345 995,655 720,700" fill="#f68d1f"/>
<polygon points="400,460 465,470 465,995 400,975" fill="#f68d1f"/>
<polygon points="305,395 400,460 400,975 305,920" fill="#f49a40"/>
<polygon points="780,650 960,610 985,840 780,880" fill="#f7983a"/>
<!-- columns yellow/green -->
<polygon points="245,360 305,395 305,925 245,890" fill="#c9a722"/>
<polygon points="620,430 720,420 720,785 620,790" fill="#c9a524"/>
<polygon points="995,320 1100,300 1100,690 995,700" fill="#c8a626"/>
<polygon points="1045,75 1140,110 1140,300 1045,320" fill="#a6a866"/>
<polygon points="555,95 610,90 610,430 555,440" fill="#a99a64"/>
<polygon points="920,20 990,15 990,255 920,270" fill="#a69864"/>
<!-- roof -->
<polygon points="65,225 935,15 1325,255 960,345 450,470 350,405" fill="#a8aa8b"/>
<polygon points="555,95 610,90 610,350 555,360" fill="#a89a66"/>
<polygon points="920,25 990,20 990,260 920,270" fill="#a89a66"/>
<polygon points="1045,75 1140,110 1140,290 1045,300" fill="#97a870"/>
<polygon points="720,250 780,240 780,370 720,380" fill="#8fae74"/>
<polygon points="370,410 590,355 660,395 445,460" fill="url(#meshb)"/>
<polygon points="895,272 985,255 1025,300 950,318" fill="url(#meshb)"/>
<!-- beams -->
<g stroke="#6aa0a0" stroke-width="8" fill="none" opacity="0.8">
<path d="M65 230 L935 20 L1325 258"/><path d="M70 235 L350 405"/><path d="M590 95 L960 345"/><path d="M450 465 L960 345 L1325 258"/>
<path d="M65 490 L245 610"/><path d="M720 655 L960 605"/><path d="M1000 520 L1325 518"/>
</g>
<path d="M30 215 L940 5 L1355 245" stroke="#f7a24a" stroke-width="10" fill="none"/>
<!-- refinements -->
<polygon points="467,612 590,600 590,704 467,712" fill="#a58a5c" opacity="0.75"/>
<polygon points="718,440 921,603 718,640" fill="url(#mesh)" opacity="0.75"/>
<polygon points="623,532 689,528 689,577 623,580" fill="#a8a47a"/>
<polygon points="623,700 689,690 689,780 623,785" fill="#a8ae60" opacity="0.8"/>

<polygon points="1044,80 1144,110 1144,310 1044,305" fill="#9aab6e" opacity="0.9"/>
<polygon points="1090,210 1100,210 1100,240 1090,240" fill="#bfe4f0"/>
<polygon points="994,435 1094,425 1094,475 994,490" fill="#a4ab8a"/>
<polygon points="1124,380 1329,500 1329,520 1124,545" fill="url(#mesh)" opacity="0.6"/>
<g stroke="#e07a18" stroke-width="2" opacity="0.7"><path d="M55 222 V752"/><path d="M72 218 V755"/><path d="M1310 250 V790"/><path d="M1335 245 V785"/></g>
<path d="M65 228 L935 18 L1326 252" stroke="#58a8b0" stroke-width="3" fill="none"/>
<path d="M100 236 L930 36 L1300 262" stroke="#4ab0c0" stroke-width="1.5" fill="none" opacity="0.8"/>
<path d="M1109 300 L1326 252 L1326 268 L1109 316Z" fill="#8aa890" opacity="0.8"/>
<path d="M62 482 L245 612 L245 628 L62 498Z" fill="#8aa08a" opacity="0.7"/>
<path d="M720 652 L960 600 L960 616 L720 668Z" fill="#8aa08a" opacity="0.7"/>
<path d="M1124 520 L1326 512 L1326 528 L1124 536Z" fill="#8aa08a" opacity="0.7"/>
<!-- openings -->
<polygon points="620,785 690,785 690,915 620,915" fill="#fff"/>
<polygon points="995,700 1085,700 1085,740 995,760" fill="#fff"/>
<polygon points="995,760 1090,740 1100,820 995,840" fill="#e8c45a"/>
</svg>
<!-- charts panel -->
<div class="a" style="left:1095px;top:129px;width:404px;height:471px;background:#efefef;border-left:1px solid #d8d8d8"></div>
<div class="a ph" style="left:1096px;top:129px;width:402px;height:40px"></div>
<div class="t ptitle" style="left:1104px;top:140px">Γραφήματα</div>
<svg class="a" style="left:1445px;top:143px" width="50" height="12" viewBox="0 0 50 12"><path d="M0 3 H9 L4.5 8Z" fill="#555"/><path d="M21 1 H26 V6 H27.5 V7 H19.5 V6 H21Z M23.5 7 V11" stroke="#555" fill="none" stroke-width="1.1"/><path d="M39 2 L47 10 M47 2 L39 10" stroke="#555" stroke-width="1.4"/></svg>
<div class="a" style="left:1496px;top:129px;width:3px;height:471px;background:#dcdcdc"></div>
<div class="a" style="left:1110px;top:171px;width:20px;height:19px;background:#d2d2d2"></div>
<div class="a" style="left:1244px;top:171px;width:20px;height:19px;background:#d2d2d2"></div>
<div class="a" style="left:1318px;top:171px;width:35px;height:19px;background:#d6d6d6"></div>
<div class="t" style="left:1320px;top:175px;font-size:11.5px;color:#bdbdbd">Αρχή</div>
<div class="t" style="left:1358px;top:175px;font-size:11.5px;color:#b0b0b0">Τέλος</div>
<div class="a" style="left:1187px;top:172px;width:1px;height:18px;background:#d4d4d4"></div>
<div class="a" style="left:1239px;top:172px;width:1px;height:18px;background:#d4d4d4"></div>
<div class="a" style="left:1313px;top:172px;width:1px;height:18px;background:#d4d4d4"></div>
<div class="a" style="left:1397px;top:172px;width:1px;height:18px;background:#d4d4d4"></div>
<div class="a" style="left:1428px;top:172px;width:1px;height:18px;background:#d4d4d4"></div>
<svg class="a" style="left:1110px;top:172px" width="365" height="18" viewBox="0 0 365 18"><circle cx="10" cy="9" r="7.5" fill="#30d050" stroke="#3070c0" stroke-width="1.5"/><path d="M5 7 H14 M6 11 H15" stroke="#2060a0" stroke-width="1.6"/><circle cx="40" cy="10" r="7.5" fill="#2a70d0"/><path d="M40 10 V2.5 A7.5 7.5 0 0 0 33 8Z" fill="#f0d0b0"/><path d="M55 2 V17 H71 L55 2Z" fill="#b0c0e0"/><path d="M55 4 H58 M55 7 H61 M55 10 H64 M55 13 H67 M55 2 V17 H71" stroke="#2a3a90" stroke-width="1.3" fill="none"/><path d="M84 3 H100 M84 6 H98 M84 9 H95 M84 12 H92 M84 15 H101" stroke="#d82020" stroke-width="2.2"/><path d="M84 2 V17" stroke="#333"/><path d="M106 3 H112 M106 6 H116 M106 9 H119 M106 12 H121 M106 15 H122" stroke="#3050b0" stroke-width="2"/><path d="M106 2 V17" stroke="#333"/><circle cx="144" cy="9" r="8" fill="#3070d8"/><path d="M159 2 V17 H176" stroke="#222" stroke-width="1.3" fill="none"/><path d="M159 16 L176 5 V17Z" fill="#90c0e8"/><path d="M159 16 Q166 0 175 8" stroke="#222" fill="none"/><path d="M179 2 V17 H196" stroke="#222" stroke-width="1.3" fill="none"/><path d="M182 16 L186 5 L189 16Z" fill="#60a060"/><path d="M188 16 L191 3 L195 16Z" fill="#e0b040"/><rect x="293" y="3" width="15" height="13" fill="#fff" stroke="#3060b0" stroke-width="1.3"/><path d="M298 12 L308 2" stroke="#e06020" stroke-width="2"/><rect x="324" y="3" width="9" height="11" fill="#fff" stroke="#3a6ab0"/><rect x="329" y="6" width="9" height="11" fill="#fff" stroke="#3a6ab0"/><rect x="345" y="2" width="15" height="15" fill="#9a4a8a"/><rect x="348" y="3" width="9" height="5" fill="#fff"/><rect x="348" y="11" width="9" height="6" fill="#ddd"/></svg>
<div class="a" style="left:1101px;top:194px;width:394px;height:199px;background:#fff"></div>
<div class="a" style="left:1101px;top:397px;width:394px;height:166px;background:#fff"></div>
<div class="t" style="left:1131px;top:207px;font-size:15.5px;letter-spacing:0.55px;color:#222">Διάγραμμα Αλληλεπίδρασης Στοιχείου Τ11-Σ2</div>
<div class="t" style="left:1131px;top:410px;font-size:15.5px;letter-spacing:0.55px;color:#222">Διάγραμμα Αλληλεπίδρασης Στοιχείου Τ11-Σ2</div>
<svg class="a" style="left:1101px;top:194px" width="394" height="369" viewBox="1101 194 394 369">
<line x1="1185.5" y1="240" x2="1185.5" y2="326" stroke="#dcdcdc"/>
<line x1="1234.4166666666667" y1="240" x2="1234.4166666666667" y2="326" stroke="#dcdcdc"/>
<line x1="1283.3333333333333" y1="240" x2="1283.3333333333333" y2="326" stroke="#dcdcdc"/>
<line x1="1332.25" y1="240" x2="1332.25" y2="326" stroke="#dcdcdc"/>
<line x1="1381.1666666666667" y1="240" x2="1381.1666666666667" y2="326" stroke="#dcdcdc"/>
<line x1="1430.0833333333333" y1="240" x2="1430.0833333333333" y2="326" stroke="#dcdcdc"/>
<line x1="1479.0" y1="240" x2="1479.0" y2="326" stroke="#dcdcdc"/>
<line x1="1185.5" y1="240.0" x2="1479" y2="240.0" stroke="#dcdcdc"/>
<line x1="1185.5" y1="268.6666666666667" x2="1479" y2="268.6666666666667" stroke="#dcdcdc"/>
<line x1="1185.5" y1="297.3333333333333" x2="1479" y2="297.3333333333333" stroke="#dcdcdc"/>
<line x1="1185.5" y1="326.0" x2="1479" y2="326.0" stroke="#dcdcdc"/>
<path d="M1185.5 255.3 C1300 262 1380 272 1410 280 C1435 285 1450 288 1452.8 291 C1445 300 1420 306 1390 311 C1320 319 1240 324 1185.5 326 Z" fill="#c3d0f4" stroke="#2a58b8" stroke-width="2"/>
<line x1="1185.5" y1="240" x2="1185.5" y2="326" stroke="#222" stroke-width="1.3"/>
<line x1="1180" y1="326" x2="1479" y2="326" stroke="#222" stroke-width="1.3"/>
<line x1="1180.5" y1="240.0" x2="1190.5" y2="240.0" stroke="#222"/>
<line x1="1182.5" y1="247.16666666666666" x2="1188.5" y2="247.16666666666666" stroke="#222"/>
<line x1="1182.5" y1="254.33333333333334" x2="1188.5" y2="254.33333333333334" stroke="#222"/>
<line x1="1182.5" y1="261.5" x2="1188.5" y2="261.5" stroke="#222"/>
<line x1="1180.5" y1="268.6666666666667" x2="1190.5" y2="268.6666666666667" stroke="#222"/>
<line x1="1182.5" y1="275.8333333333333" x2="1188.5" y2="275.8333333333333" stroke="#222"/>
<line x1="1182.5" y1="283.0" x2="1188.5" y2="283.0" stroke="#222"/>
<line x1="1182.5" y1="290.1666666666667" x2="1188.5" y2="290.1666666666667" stroke="#222"/>
<line x1="1180.5" y1="297.3333333333333" x2="1190.5" y2="297.3333333333333" stroke="#222"/>
<line x1="1182.5" y1="304.5" x2="1188.5" y2="304.5" stroke="#222"/>
<line x1="1182.5" y1="311.6666666666667" x2="1188.5" y2="311.6666666666667" stroke="#222"/>
<line x1="1182.5" y1="318.8333333333333" x2="1188.5" y2="318.8333333333333" stroke="#222"/>
<line x1="1180.5" y1="326.0" x2="1190.5" y2="326.0" stroke="#222"/>
<line x1="1185.5" y1="322" x2="1185.5" y2="330" stroke="#222"/>
<line x1="1234.4166666666667" y1="322" x2="1234.4166666666667" y2="330" stroke="#222"/>
<line x1="1283.3333333333333" y1="322" x2="1283.3333333333333" y2="330" stroke="#222"/>
<line x1="1332.25" y1="322" x2="1332.25" y2="330" stroke="#222"/>
<line x1="1381.1666666666667" y1="322" x2="1381.1666666666667" y2="330" stroke="#222"/>
<line x1="1430.0833333333333" y1="322" x2="1430.0833333333333" y2="330" stroke="#222"/>
<line x1="1479.0" y1="322" x2="1479.0" y2="330" stroke="#222"/>
<text x="1176" y="244.0" font-size="11.5" text-anchor="end" fill="#222" font-family="Liberation Sans">3000</text>
<text x="1176" y="272.6666666666667" font-size="11.5" text-anchor="end" fill="#222" font-family="Liberation Sans">2000</text>
<text x="1176" y="301.3333333333333" font-size="11.5" text-anchor="end" fill="#222" font-family="Liberation Sans">1000</text>
<text x="1176" y="330.0" font-size="11.5" text-anchor="end" fill="#222" font-family="Liberation Sans">0</text>
<text x="1185.5" y="348" font-size="11.5" text-anchor="middle" fill="#222" font-family="Liberation Sans">0</text>
<text x="1283.3333333333333" y="348" font-size="11.5" text-anchor="middle" fill="#222" font-family="Liberation Sans">500</text>
<text x="1381.1666666666667" y="348" font-size="11.5" text-anchor="middle" fill="#222" font-family="Liberation Sans">1000</text>
<text x="1479.0" y="348" font-size="11.5" text-anchor="middle" fill="#222" font-family="Liberation Sans">1500</text>
<text x="1333" y="381" font-size="17.5" text-anchor="middle" fill="#222" font-family="Liberation Sans">M2(kNm)</text>
<text transform="translate(1135 283) rotate(-90)" font-size="17.5" text-anchor="middle" fill="#222" font-family="Liberation Sans">N(kN)</text>
<rect x="1408.5" y="235.5" width="80" height="53" fill="#f4f4f4" fill-opacity="0.85" stroke="#e4e4e4"/>
<rect x="1418" y="247" width="28" height="9" fill="#c3d0f4" stroke="#2a58b8" stroke-width="1.5"/>
<text x="1451" y="256" font-size="11" fill="#222" font-family="Liberation Sans">M2-N</text>
<line x1="1418" y1="270" x2="1446" y2="270" stroke="#b07040" stroke-width="2"/>
<text x="1451" y="275" font-size="11" fill="#222" font-family="Liberation Sans">Sd</text>
<line x1="1184.5" y1="444.6" x2="1184.5" y2="530.3" stroke="#dcdcdc"/>
<line x1="1199.35" y1="444.6" x2="1199.35" y2="530.3" stroke="#dcdcdc"/>
<line x1="1214.2" y1="444.6" x2="1214.2" y2="530.3" stroke="#dcdcdc"/>
<line x1="1229.05" y1="444.6" x2="1229.05" y2="530.3" stroke="#dcdcdc"/>
<line x1="1243.9" y1="444.6" x2="1243.9" y2="530.3" stroke="#dcdcdc"/>
<line x1="1258.75" y1="444.6" x2="1258.75" y2="530.3" stroke="#dcdcdc"/>
<line x1="1273.6" y1="444.6" x2="1273.6" y2="530.3" stroke="#dcdcdc"/>
<line x1="1288.45" y1="444.6" x2="1288.45" y2="530.3" stroke="#dcdcdc"/>
<line x1="1303.3" y1="444.6" x2="1303.3" y2="530.3" stroke="#dcdcdc"/>
<line x1="1318.15" y1="444.6" x2="1318.15" y2="530.3" stroke="#dcdcdc"/>
<line x1="1333.0" y1="444.6" x2="1333.0" y2="530.3" stroke="#dcdcdc"/>
<line x1="1347.85" y1="444.6" x2="1347.85" y2="530.3" stroke="#dcdcdc"/>
<line x1="1362.7" y1="444.6" x2="1362.7" y2="530.3" stroke="#dcdcdc"/>
<line x1="1377.55" y1="444.6" x2="1377.55" y2="530.3" stroke="#dcdcdc"/>
<line x1="1392.4" y1="444.6" x2="1392.4" y2="530.3" stroke="#dcdcdc"/>
<line x1="1407.25" y1="444.6" x2="1407.25" y2="530.3" stroke="#dcdcdc"/>
<line x1="1422.1" y1="444.6" x2="1422.1" y2="530.3" stroke="#dcdcdc"/>
<line x1="1436.95" y1="444.6" x2="1436.95" y2="530.3" stroke="#dcdcdc"/>
<line x1="1451.8" y1="444.6" x2="1451.8" y2="530.3" stroke="#dcdcdc"/>
<line x1="1466.65" y1="444.6" x2="1466.65" y2="530.3" stroke="#dcdcdc"/>
<line x1="1481.5" y1="444.6" x2="1481.5" y2="530.3" stroke="#dcdcdc"/>
<line x1="1184.5" y1="444.6" x2="1481.5" y2="444.6" stroke="#e2e2e2"/>
<line x1="1184.5" y1="458.8833333333333" x2="1481.5" y2="458.8833333333333" stroke="#e2e2e2"/>
<line x1="1184.5" y1="473.1666666666667" x2="1481.5" y2="473.1666666666667" stroke="#e2e2e2"/>
<line x1="1184.5" y1="487.45" x2="1481.5" y2="487.45" stroke="#e2e2e2"/>
<line x1="1184.5" y1="501.7333333333333" x2="1481.5" y2="501.7333333333333" stroke="#e2e2e2"/>
<line x1="1184.5" y1="516.0166666666667" x2="1481.5" y2="516.0166666666667" stroke="#e2e2e2"/>
<line x1="1184.5" y1="530.3" x2="1481.5" y2="530.3" stroke="#e2e2e2"/>
<path d="M1184.5 448.2 C1300 459 1380 468 1420 476 C1438 481 1446 486 1448.3 489.6 C1438 499 1420 505 1390 511 C1320 522 1240 529 1184.5 530.3 Z" fill="#c3d0f4" stroke="#2a58b8" stroke-width="2"/>
<line x1="1184.5" y1="444.6" x2="1184.5" y2="530.3" stroke="#222" stroke-width="1.3"/>
<line x1="1179" y1="530.3" x2="1481.5" y2="530.3" stroke="#222" stroke-width="1.3"/>
<line x1="1179.5" y1="444.6" x2="1187.5" y2="444.6" stroke="#222"/>
<line x1="1181.5" y1="451.7416666666667" x2="1187.5" y2="451.7416666666667" stroke="#222"/>
<line x1="1181.5" y1="458.8833333333333" x2="1187.5" y2="458.8833333333333" stroke="#222"/>
<line x1="1181.5" y1="466.025" x2="1187.5" y2="466.025" stroke="#222"/>
<line x1="1179.5" y1="473.1666666666667" x2="1187.5" y2="473.1666666666667" stroke="#222"/>
<line x1="1181.5" y1="480.30833333333334" x2="1187.5" y2="480.30833333333334" stroke="#222"/>
<line x1="1181.5" y1="487.45" x2="1187.5" y2="487.45" stroke="#222"/>
<line x1="1181.5" y1="494.59166666666664" x2="1187.5" y2="494.59166666666664" stroke="#222"/>
<line x1="1179.5" y1="501.7333333333333" x2="1187.5" y2="501.7333333333333" stroke="#222"/>
<line x1="1181.5" y1="508.875" x2="1187.5" y2="508.875" stroke="#222"/>
<line x1="1181.5" y1="516.0166666666667" x2="1187.5" y2="516.0166666666667" stroke="#222"/>
<line x1="1181.5" y1="523.1583333333333" x2="1187.5" y2="523.1583333333333" stroke="#222"/>
<line x1="1179.5" y1="530.3" x2="1187.5" y2="530.3" stroke="#222"/>
<line x1="1184.5" y1="526.3" x2="1184.5" y2="534.3" stroke="#222"/>
<line x1="1199.35" y1="527.3" x2="1199.35" y2="533.3" stroke="#222"/>
<line x1="1214.2" y1="526.3" x2="1214.2" y2="534.3" stroke="#222"/>
<line x1="1229.05" y1="527.3" x2="1229.05" y2="533.3" stroke="#222"/>
<line x1="1243.9" y1="526.3" x2="1243.9" y2="534.3" stroke="#222"/>
<line x1="1258.75" y1="527.3" x2="1258.75" y2="533.3" stroke="#222"/>
<line x1="1273.6" y1="526.3" x2="1273.6" y2="534.3" stroke="#222"/>
<line x1="1288.45" y1="527.3" x2="1288.45" y2="533.3" stroke="#222"/>
<line x1="1303.3" y1="526.3" x2="1303.3" y2="534.3" stroke="#222"/>
<line x1="1318.15" y1="527.3" x2="1318.15" y2="533.3" stroke="#222"/>
<line x1="1333.0" y1="526.3" x2="1333.0" y2="534.3" stroke="#222"/>
<line x1="1347.85" y1="527.3" x2="1347.85" y2="533.3" stroke="#222"/>
<line x1="1362.7" y1="526.3" x2="1362.7" y2="534.3" stroke="#222"/>
<line x1="1377.55" y1="527.3" x2="1377.55" y2="533.3" stroke="#222"/>
<line x1="1392.4" y1="526.3" x2="1392.4" y2="534.3" stroke="#222"/>
<line x1="1407.25" y1="527.3" x2="1407.25" y2="533.3" stroke="#222"/>
<line x1="1422.1" y1="526.3" x2="1422.1" y2="534.3" stroke="#222"/>
<line x1="1436.95" y1="527.3" x2="1436.95" y2="533.3" stroke="#222"/>
<line x1="1451.8" y1="526.3" x2="1451.8" y2="534.3" stroke="#222"/>
<line x1="1466.65" y1="527.3" x2="1466.65" y2="533.3" stroke="#222"/>
<line x1="1481.5" y1="526.3" x2="1481.5" y2="534.3" stroke="#222"/>
<text x="1175" y="448.6" font-size="11.5" text-anchor="end" fill="#222" font-family="Liberation Sans">3000</text>
<text x="1175" y="477.1666666666667" font-size="11.5" text-anchor="end" fill="#222" font-family="Liberation Sans">2000</text>
<text x="1175" y="505.7333333333333" font-size="11.5" text-anchor="end" fill="#222" font-family="Liberation Sans">1000</text>
<text x="1175" y="534.3" font-size="11.5" text-anchor="end" fill="#222" font-family="Liberation Sans">0</text>
<text x="1184.5" y="552.5" font-size="11.5" text-anchor="middle" fill="#222" font-family="Liberation Sans">0</text>
<text x="1214.2" y="552.5" font-size="11.5" text-anchor="middle" fill="#222" font-family="Liberation Sans">20</text>
<text x="1243.9" y="552.5" font-size="11.5" text-anchor="middle" fill="#222" font-family="Liberation Sans">40</text>
<text x="1273.6" y="552.5" font-size="11.5" text-anchor="middle" fill="#222" font-family="Liberation Sans">60</text>
<text x="1303.3" y="552.5" font-size="11.5" text-anchor="middle" fill="#222" font-family="Liberation Sans">80</text>
<text x="1333.0" y="552.5" font-size="11.5" text-anchor="middle" fill="#222" font-family="Liberation Sans">100</text>
<text x="1362.7" y="552.5" font-size="11.5" text-anchor="middle" fill="#222" font-family="Liberation Sans">120</text>
<text x="1392.4" y="552.5" font-size="11.5" text-anchor="middle" fill="#222" font-family="Liberation Sans">140</text>
<text x="1422.1" y="552.5" font-size="11.5" text-anchor="middle" fill="#222" font-family="Liberation Sans">160</text>
<text x="1451.8" y="552.5" font-size="11.5" text-anchor="middle" fill="#222" font-family="Liberation Sans">180</text>
<text x="1481.5" y="552.5" font-size="11.5" text-anchor="middle" fill="#222" font-family="Liberation Sans">200</text>
<text transform="translate(1135 487) rotate(-90)" font-size="17.5" text-anchor="middle" fill="#222" font-family="Liberation Sans">N(kN)</text>
<rect x="1408.5" y="439.5" width="80" height="53" fill="#f4f4f4" fill-opacity="0.85" stroke="#e4e4e4"/>
<rect x="1418" y="451" width="28" height="9" fill="#c3d0f4" stroke="#2a58b8" stroke-width="1.5"/>
<text x="1451" y="460" font-size="11" fill="#222" font-family="Liberation Sans">M3-N</text>
<line x1="1418" y1="474" x2="1446" y2="474" stroke="#b07040" stroke-width="2"/>
<text x="1451" y="479" font-size="11" fill="#222" font-family="Liberation Sans">Sd</text>
</svg><!-- right panel -->
<div class="a" style="left:1499px;top:129px;width:416px;height:969px;background:#efefef;border-left:1px solid #d8d8d8"></div>
<div class="a ph" style="left:1500px;top:129px;width:415px;height:43px"></div>
<div class="t ptitle" style="left:1510px;top:142px;font-size:21.5px">Προσθήκη Στοιχείων</div>
<svg class="a" style="left:1904px;top:136px" width="8" height="9"><path d="M7 0 V9 L1 4.5Z" fill="#555"/></svg>
<div class="a" style="left:1508px;top:173px;width:405px;height:28px;background:#ececec"></div>
<div class="t" style="left:1538px;top:181px;font-size:11.5px;color:#333">Κατ.</div>
<div class="t" style="left:1588px;top:181px;font-size:11.5px;color:#b0b0b0">Ορ.</div>
<div class="t" style="left:1633px;top:181px;font-size:11.5px;color:#b0b0b0">Τεγ.</div>
<div class="t" style="left:1681px;top:181px;font-size:11.5px;color:#b0b0b0">Συνδ.</div>
<div class="t" style="left:1746px;top:181px;font-size:11.5px;color:#333">Αλλαγή</div>
<div class="t" style="left:1817px;top:181px;font-size:11.5px;color:#333">Νέα</div>
<div class="a" style="left:1720px;top:176px;width:1px;height:22px;background:#d4d4d4"></div>
<div class="a" style="left:1792px;top:176px;width:1px;height:22px;background:#d4d4d4"></div>
<div class="a" style="left:1848px;top:176px;width:1px;height:22px;background:#d4d4d4"></div>
<div class="a" style="left:1900px;top:176px;width:1px;height:22px;background:#d4d4d4"></div>
<svg class="a" style="left:1520px;top:178px" width="395" height="18" viewBox="1520 178 395 18"><path d="M1522 181 H1527 V189 H1534 V193 H1522Z" fill="#888" stroke="#444"/><path d="M1571 182 V193 H1585 V188 H1575 V182Z" fill="#d0e4f4" stroke="#6a9ac8"/><path d="M1617 193 L1620 183 L1626 181 L1628 186 L1622 194Z" fill="#b8c4a0"/><path d="M1665 180 L1678 194 M1678 180 L1665 194" stroke="#d08040" stroke-width="2.2"/><rect x="1727" y="184" width="14" height="10" fill="#fff" stroke="#444"/><path d="M1729 187 H1739 M1729 190 H1739" stroke="#444"/><path d="M1733 184 L1738 179 H1743 V184" fill="#e0b040" stroke="#806020"/><path d="M1806 180 V194 M1799 187 H1813" stroke="#8a7020" stroke-width="5"/><path d="M1806 181 V193 M1800 187 H1812" stroke="#f8d860" stroke-width="3"/><circle cx="1862" cy="187" r="7" fill="#fff" stroke="#2a4a8a" stroke-width="1.5"/><path d="M1862 182 V192 M1857 187 H1867" stroke="#2a4a8a" stroke-width="1.5"/><rect x="1876" y="180" width="12" height="9" fill="#fff" stroke="#333"/><circle cx="1886" cy="190" r="3.5" fill="#fff" stroke="#666"/><path d="M1888 192 L1892 195" stroke="#c8a040" stroke-width="2"/><path d="M1904 181 L1907 184 L1904 187 M1908 181 L1911 184 L1908 187" stroke="#555" fill="none"/></svg>
<div class="a" style="left:1508px;top:202px;width:406px;height:269px;background:#fff;border:1px solid #777"></div>
<svg class="a" style="left:1508px;top:202px" width="406" height="269" viewBox="1508 202 406 269"><rect x="1689" y="230" width="44" height="212" fill="none" stroke="#d8c050" stroke-width="1.2"/><rect x="1686.5" y="227.5" width="5" height="5" fill="#d8c060"/><rect x="1708.5" y="227.5" width="5" height="5" fill="#d8c060"/><rect x="1730.5" y="227.5" width="5" height="5" fill="#d8c060"/><rect x="1686.5" y="333.5" width="5" height="5" fill="#d8c060"/><rect x="1730.5" y="333.5" width="5" height="5" fill="#d8c060"/><rect x="1686.5" y="439.5" width="5" height="5" fill="#d8c060"/><rect x="1708.5" y="439.5" width="5" height="5" fill="#d8c060"/><rect x="1730.5" y="439.5" width="5" height="5" fill="#d8c060"/><path d="M1711 336 H1778 M1711 336 V403" stroke="#b02020" stroke-width="1.3"/><rect x="1706" y="331" width="10" height="10" fill="#e01010"/><text x="1773" y="350" font-size="13" fill="#b02020" font-family="Liberation Sans">2</text><text transform="translate(1715 398) rotate(90)" font-size="13" fill="#b02020" font-family="Liberation Sans">3</text></svg>
<div class="a" style="left:1510px;top:476px;width:285px;height:32px;background:#fbfbfb;border:1px solid #e2e2e2;border-radius:4px;box-shadow:0 1px 2px rgba(0,0,0,0.12)"></div>
<svg class="a" style="left:1516px;top:477px" width="32" height="30" viewBox="0 0 32 30"><path d="M2 4 L6 1 H30 V25 L26 29 H2Z" fill="#8c4a25"/><rect x="2" y="4" width="24" height="25" fill="url(#brk)"/><path d="M26 4 L30 1 V25 L26 29Z" fill="#6e3318"/><path d="M2 4 L6 1 H30 L26 4Z" fill="#b06a3a"/></svg>
<div class="t" style="left:1555px;top:477px;font-size:11.3px;font-weight:bold;color:#222">Φέρουσα Τοιχοποιία</div>
<div class="t" style="left:1555px;top:494px;font-size:11.5px;color:#222">Πεσσοί και Υπέρθυρα Φέρουσας Τοιχοπο</div>
<svg class="a" style="left:1782px;top:499px" width="9" height="5"><path d="M0 0 H9 L4.5 5Z" fill="#555"/></svg>
<div class="a" style="left:1510px;top:515px;width:285px;height:32px;background:#fbfbfb;border:1px solid #e2e2e2;border-radius:4px;box-shadow:0 1px 2px rgba(0,0,0,0.12)"></div>
<svg class="a" style="left:1516px;top:516px" width="32" height="30" viewBox="0 0 32 30"><path d="M2 4 L6 1 H30 V25 L26 29 H2Z" fill="#8c4a25"/><rect x="2" y="4" width="24" height="25" fill="url(#brk)"/><path d="M26 4 L30 1 V25 L26 29Z" fill="#6e3318"/><path d="M2 4 L6 1 H30 L26 4Z" fill="#b06a3a"/></svg>
<div class="t" style="left:1555px;top:525px;font-size:11.5px;color:#222">Πεσσοί</div>
<svg class="a" style="left:1782px;top:531px" width="9" height="5"><path d="M0 0 H9 L4.5 5Z" fill="#555"/></svg>
<div class="a" style="left:1510px;top:554px;width:285px;height:32px;background:#fbfbfb;border:1px solid #e2e2e2;border-radius:4px;box-shadow:0 1px 2px rgba(0,0,0,0.12)"></div>
<svg class="a" style="left:1782px;top:570px" width="9" height="5"><path d="M0 0 H9 L4.5 5Z" fill="#555"/></svg>
<div class="ck" style="left:1800px;top:481px;width:12px;height:12px;border-radius:2px"></div>
<div class="t" style="left:1813px;top:482px;font-size:11.5px;color:#222">φ(°)=</div>
<div class="a" style="left:1848px;top:477px;width:53px;height:19px;background:#f0f0f0;border:1px solid #cfcfcf"></div>
<div class="t" style="left:1880px;top:481px;font-size:11.5px;color:#888">0.0</div>
<svg class="a" style="left:1903px;top:478px" width="10" height="17"><path d="M2 6 L5 2 L8 6Z M2 11 L5 15 L8 11Z" fill="#777"/></svg>
<div class="ck" style="left:1800px;top:520px;width:12px;height:12px;border-radius:2px"></div>
<div class="t" style="left:1813px;top:521px;font-size:11.5px;color:#222">Αλλαγή Πάνω</div>
<div class="ck" style="left:1800px;top:559px;width:12px;height:12px;border-radius:2px"></div>
<div class="t" style="left:1813px;top:560px;font-size:11.5px;color:#222">Αλλαγή Κάτω</div>
<div class="a" style="left:1767px;top:591px;width:147px;height:24px;background:#fff;border:1px solid #888"></div>
<div class="a" style="left:1745px;top:618px;width:50px;height:201px;background:#fff;border-right:1px solid #666;border-bottom:1px solid #666"></div>
<div class="a" style="left:1769px;top:618px;width:1px;height:201px;background:#555"></div>
<div class="a" style="left:1745px;top:639px;width:50px;height:1px;background:#555"></div>
<div class="t" style="left:1757px;top:623px;font-size:12px;color:#222">ο)</div>
<div class="t" style="left:1776px;top:623px;font-size:12px;color:#222">Ιδ</div>
<div class="a" style="left:1745px;top:658px;width:50px;height:1px;background:#777"></div>
<div class="a" style="left:1771px;top:643px;width:22px;height:15px;background:#fff;border:1px solid #d0d0d0;border-radius:3px"></div>
<div class="t" style="left:1777px;top:645px;font-size:11px;color:#222">...</div>
<div class="a" style="left:1745px;top:676px;width:50px;height:1px;background:#777"></div>
<div class="a" style="left:1771px;top:660px;width:22px;height:15px;background:#fff;border:1px solid #d0d0d0;border-radius:3px"></div>
<div class="t" style="left:1777px;top:662px;font-size:11px;color:#222">...</div>
<div class="a" style="left:1745px;top:694px;width:50px;height:1px;background:#777"></div>
<div class="a" style="left:1771px;top:678px;width:22px;height:15px;background:#fff;border:1px solid #d0d0d0;border-radius:3px"></div>
<div class="t" style="left:1777px;top:680px;font-size:11px;color:#222">...</div>
<div class="a" style="left:1745px;top:711px;width:50px;height:1px;background:#777"></div>
<div class="a" style="left:1771px;top:696px;width:22px;height:15px;background:#fff;border:1px solid #d0d0d0;border-radius:3px"></div>
<div class="t" style="left:1777px;top:698px;font-size:11px;color:#222">...</div>
<div class="a" style="left:1745px;top:728px;width:50px;height:1px;background:#777"></div>
<div class="a" style="left:1771px;top:713px;width:22px;height:15px;background:#fff;border:1px solid #d0d0d0;border-radius:3px"></div>
<div class="t" style="left:1777px;top:715px;font-size:11px;color:#222">...</div>
<div class="a" style="left:1745px;top:746px;width:50px;height:1px;background:#777"></div>
<div class="a" style="left:1771px;top:730px;width:22px;height:15px;background:#fff;border:1px solid #d0d0d0;border-radius:3px"></div>
<div class="t" style="left:1777px;top:732px;font-size:11px;color:#222">...</div>
<div class="a" style="left:1745px;top:764px;width:50px;height:1px;background:#777"></div>
<div class="a" style="left:1771px;top:748px;width:22px;height:15px;background:#fff;border:1px solid #d0d0d0;border-radius:3px"></div>
<div class="t" style="left:1777px;top:750px;font-size:11px;color:#222">...</div>
<div class="a" style="left:1745px;top:781px;width:50px;height:1px;background:#777"></div>
<div class="a" style="left:1771px;top:766px;width:22px;height:15px;background:#fff;border:1px solid #d0d0d0;border-radius:3px"></div>
<div class="t" style="left:1777px;top:768px;font-size:11px;color:#222">...</div>
<div class="a" style="left:1745px;top:798px;width:50px;height:1px;background:#777"></div>
<div class="a" style="left:1771px;top:783px;width:22px;height:15px;background:#fff;border:1px solid #d0d0d0;border-radius:3px"></div>
<div class="t" style="left:1777px;top:785px;font-size:11px;color:#222">...</div>
<div class="a" style="left:1745px;top:816px;width:50px;height:1px;background:#777"></div>
<div class="a" style="left:1771px;top:800px;width:22px;height:15px;background:#fff;border:1px solid #d0d0d0;border-radius:3px"></div>
<div class="t" style="left:1777px;top:802px;font-size:11px;color:#222">...</div>
<div class="a" style="left:1745px;top:1056px;width:170px;height:8px;background:#dcdcdc"></div>
<div class="a" style="left:1659px;top:1066px;width:24px;height:28px;background:#d8d8d8"></div>
<svg class="a" style="left:1610px;top:1070px" width="305" height="22" viewBox="1610 1070 305 22"><text x="1615" y="1087" font-size="17" font-weight="bold" fill="#e8c030" font-family="Liberation Serif">i</text><path d="M1636 1076 L1644 1073 L1652 1076 L1644 1079Z M1636 1080 L1644 1083 L1652 1080 M1636 1084 L1644 1087 L1652 1084" stroke="#3a6ab0" fill="#c8dcf0" stroke-width="1.2"/><path d="M1663 1074 H1667 V1084 H1678 V1088 H1663Z" fill="#fff" stroke="#222" stroke-width="1.3"/><path d="M1664 1082 L1667 1079 M1668 1087 L1672 1084 M1672 1087 L1676 1084" stroke="#555"/><path d="M1673 1077 H1680 M1676.5 1073.5 V1080.5" stroke="#4caf50" stroke-width="2.3"/><rect x="1689" y="1077" width="12" height="11" fill="#fff" stroke="#222" stroke-width="1.3"/><circle cx="1695" cy="1082" r="2.5" fill="none" stroke="#d02020"/><path d="M1698 1078 L1704 1073" stroke="#4caf50" stroke-width="2"/><path d="M1716 1073 V1088 H1730" stroke="#222" fill="none" stroke-width="1.2"/><path d="M1717 1076 Q1720 1086 1730 1086" stroke="#888" fill="none"/><text x="1725" y="1079" font-size="7" fill="#222">N</text><path d="M1741 1073 V1088 H1756" stroke="#222" fill="none" stroke-width="1.2"/><rect x="1744" y="1080" width="4" height="8" fill="#4caf50"/><rect x="1749" y="1083" width="5" height="5" fill="#d03020"/><text x="1767" y="1081" font-size="9" font-weight="bold" fill="#3060b0" font-family="Liberation Sans">CR</text><path d="M1769 1084 V1089 M1772 1084 V1089 M1775 1084 V1089 M1778 1084 V1089" stroke="#e04040" stroke-width="2"/><path d="M1795 1074 H1802 L1805 1077 V1088 H1795Z" fill="#fff" stroke="#555"/><rect x="1821" y="1074" width="12" height="14" rx="2" fill="#fff" stroke="#222" stroke-width="1.3"/><path d="M1826 1082 L1833 1075" stroke="#222"/><rect x="1846" y="1074" width="14" height="14" fill="#fff" stroke="#222" stroke-width="1.3"/><path d="M1852 1080 H1860 M1852 1084 H1860 M1852 1074 V1088" stroke="#222"/><path d="M1879 1073 L1886 1077 V1085 L1879 1089 L1872 1085 V1077Z" fill="#e04040"/><path d="M1879 1073 L1886 1077 V1085 L1879 1081Z" fill="#4080e0"/><path d="M1872 1085 L1879 1081 L1879 1089Z" fill="#40c040"/><path d="M1872 1077 L1879 1081 L1872 1085Z" fill="#f0d030"/><path d="M1901 1073 L1904 1076 L1901 1079 M1905 1073 L1908 1076 L1905 1079" stroke="#666" fill="none"/><path d="M1901 1084 H1909 L1905 1088Z" fill="#666"/></svg><!-- work window 1 -->
<div class="a" style="left:403px;top:600px;width:1096px;height:498px;background:#efefef;border-top:1px solid #d0d0d0"></div>
<div class="a ph" style="left:404px;top:602px;width:1095px;height:44px"></div>
<div class="t ptitle" style="left:408px;top:616px;font-size:21px">Παράθυρο Εργασίας 1</div>
<div class="a" style="left:404px;top:646px;width:1095px;height:24px;background:#ededed;border-bottom:1px solid #d8d8d8"></div>
<div class="t tr" style="left:417px;top:652px;font-size:11.5px">Επιλεγμένα</div>
<div class="a" style="left:482px;top:648px;width:30px;height:19px;background:#d2d2d2"></div>
<div class="t tr" style="left:484px;top:652px;font-size:11.5px">Όλα</div>
<div class="a" style="left:517px;top:648px;width:1px;height:20px;background:#d4d4d4"></div>
<div class="t tr" style="left:525px;top:652px;font-size:11.5px">Επιλογή με αλλαγή γραμμής</div>
<svg class="a" style="left:404px;top:670px" width="428" height="118" viewBox="404 670 428 118">
<rect x="405" y="671" width="424.6" height="74.2" fill="#efefef"/>
<rect x="434.5" y="745.2" width="395.1" height="40.1" fill="#fff"/>
<rect x="405" y="745.2" width="29.5" height="40.1" fill="#efefef"/>
<rect x="405" y="671" width="424.6" height="114.3" fill="none" stroke="#222" stroke-width="1.3"/>
<line x1="434.5" y1="671" x2="434.5" y2="785.3" stroke="#222" stroke-width="1.3"/>
<line x1="459.5" y1="671" x2="459.5" y2="785.3" stroke="#222" stroke-width="1.3"/>
<line x1="579.2" y1="671" x2="579.2" y2="785.3" stroke="#222" stroke-width="1.3"/>
<line x1="659.5" y1="695.7" x2="659.5" y2="785.3" stroke="#222" stroke-width="1.3"/>
<line x1="729.5" y1="695.7" x2="729.5" y2="785.3" stroke="#222" stroke-width="1.3"/>
<line x1="779.7" y1="695.7" x2="779.7" y2="785.3" stroke="#222" stroke-width="1.3"/>
<line x1="405" y1="745.2" x2="829.6" y2="745.2" stroke="#222" stroke-width="1.3"/>
<line x1="405" y1="765.3" x2="829.6" y2="765.3" stroke="#222" stroke-width="1.3"/>
<line x1="579.2" y1="695.7" x2="829.6" y2="695.7" stroke="#222" stroke-width="1.3"/>
<rect x="437.5" y="747.3" width="19.5" height="16" rx="3" fill="#fff" stroke="#d8d8d8"/>
<rect x="437.5" y="767.3" width="19.5" height="16" rx="3" fill="#fff" stroke="#d8d8d8"/>
</svg>
<div class="t" style="left:320px;width:200px;text-align:center;top:702px;font-size:11.5px;color:#222;">α/α</div>
<div class="t" style="left:347px;width:200px;text-align:center;top:702px;font-size:11.5px;color:#222;">i</div>
<div class="t" style="left:419px;width:200px;text-align:center;top:702px;font-size:11.5px;color:#222;">Όνομα</div>
<div class="t" style="left:604px;width:200px;text-align:center;top:677px;font-size:11.5px;color:#222;font-weight:bold;font-size:11px">Φέρουσα Τοιχοποιία</div>
<div class="t" style="left:519px;width:200px;text-align:center;top:715px;font-size:11.5px;color:#222;">Κανονισμός</div>
<div class="t" style="left:594px;width:200px;text-align:center;top:715px;font-size:11.5px;color:#222;">ΣΑΔ</div>
<div class="t" style="left:654px;width:200px;text-align:center;top:715px;font-size:11.5px;color:#222;">CFm</div>
<div class="t" style="left:705px;width:200px;text-align:center;top:715px;font-size:11.5px;color:#222;">γm</div>
<div class="t" style="left:332px;width:100px;text-align:right;top:750px;font-size:11.5px;color:#222;">0</div>
<div class="t" style="left:347px;width:200px;text-align:center;top:749px;font-size:11.5px;color:#222;">...</div>
<div class="t" style="left:347px;width:200px;text-align:center;top:769px;font-size:11.5px;color:#222;">...</div>
<div class="t" style="left:462px;top:749px;font-size:11.5px;color:#222;">γ MSNRY</div>
<div class="t" style="left:519px;width:200px;text-align:center;top:749px;font-size:11.5px;color:#222;color:#777">ΚΑΔΕΤ</div>
<div class="t" style="left:594px;width:200px;text-align:center;top:749px;font-size:11.5px;color:#222;">ΣΑΔ2</div>
<div class="t" style="left:654px;width:200px;text-align:center;top:749px;font-size:11.5px;color:#222;">1.20</div>
<div class="t" style="left:705px;width:200px;text-align:center;top:749px;font-size:11.5px;color:#222;">1.35</div>
<div class="t" style="left:462px;top:769px;font-size:11.5px;color:#222;font-style:italic;color:#888">Νέο σετ παραμέτρων</div>
<div class="a" style="left:404px;top:1071px;width:1095px;height:25px;background:#e9e9e9;border-top:1px solid #777"></div>
<div class="a" style="left:512px;top:1072px;width:146px;height:22px;background:#fafafa;border:1px solid #cfcfcf;border-top:none"></div>
<svg class="a" style="left:410px;top:1075px" width="12" height="16"><rect x="1" y="1" width="10" height="14" rx="2" fill="#fff" stroke="#333" stroke-width="1.3"/></svg>
<div class="t tr" style="left:426px;top:1077px;font-size:11.5px">Αποτελέσματα</div>
<svg class="a" style="left:516px;top:1074px" width="16" height="18" viewBox="0 0 16 18"><rect x="0.5" y="0.5" width="13" height="13" fill="#fff" stroke="#8aaad0"/><rect x="0.5" y="0.5" width="13" height="3" fill="#8aaad0"/><path d="M0.5 7 H13.5 M5 3.5 V13.5 M9 3.5 V13.5" stroke="#c0d0e8"/><text x="9" y="17.5" font-size="9" font-weight="bold" fill="#a02020">1</text></svg>
<div class="t tr" style="left:534px;top:1077px;font-size:11.5px">Παράθυρο Εργασίας 1</div>
<svg class="a" style="left:664px;top:1074px" width="16" height="16" viewBox="0 0 16 16"><path d="M1 8 L8 1.5 L15 8" stroke="#c08040" stroke-width="1.5" fill="none"/><rect x="3" y="7" width="10" height="8" fill="#f8e0b0" stroke="#b07030"/><rect x="6" y="10" width="4" height="5" fill="#e0a040"/></svg>
<div class="t tr" style="left:683px;top:1077px;font-size:11.5px">Βοήθεια</div>
<div class="a" style="left:0;top:1096px;width:1915px;height:22px;background:#f0f0f0;border-top:1px solid #dcdcdc"></div>
<div class="t" style="left:8px;top:1103px;font-size:12.3px;color:#444">www.tol.com.gr</div>
<svg class="a" style="left:455px;top:1101px" width="50" height="15" viewBox="0 0 50 15"><rect x="0.5" y="0.5" width="14" height="13" fill="#fff" stroke="#6a8ab0"/><rect x="0.5" y="0.5" width="14" height="3" fill="#6a8ab0"/><path d="M0.5 7 H14.5 M0.5 10 H14.5 M5 3 V13.5 M10 3 V13.5" stroke="#9ab"/><path d="M17 6 L19.5 8.5 L22 6" stroke="#444" fill="none"/><rect x="31" y="1" width="17" height="12" fill="#fff"/><path d="M31 2 H48 M31 5 H48 M31 8 H48 M31 11 H48" stroke="#3060b0" stroke-width="1.5"/><rect x="31" y="1" width="6" height="6" fill="#3060b0"/></svg>
<div class="t" style="left:518px;top:1103px;font-size:11.5px;color:#333">ΕΥΡΩΚΩΔΙΚΕΣ | Ιδιομορφική | Κ.Π.Μ. | q=1.00 | Σχεδιασμού | Τύπος 1</div>
<div class="t" style="left:974px;top:1103px;font-size:11.5px;color:#333">Αποτίμηση-Ενισχύσεις | m-Τοπ.Συντ.Συμπ. | ΟΣ: ΕΚ8-3 | ΦΤ: ΚΑΔΕΤ</div>
<svg class="a" style="left:1377px;top:1100px" width="13" height="15" viewBox="0 0 13 15"><path d="M3 7 V4.5 A3.5 3.5 0 0 1 10 4.5 V7" stroke="#a08020" stroke-width="1.5" fill="none"/><rect x="1" y="7" width="11" height="8" rx="1" fill="#e8c040" stroke="#a08020"/></svg>
<div class="t" style="left:1579px;top:1103px;font-size:11.5px;color:#333">κάναβος</div>
<svg class="a" style="left:1631px;top:1105px" width="8" height="5"><path d="M1 1 L4 4 L7 1" stroke="#444" fill="none"/></svg>
<div class="t" style="left:1643px;top:1103px;font-size:11.5px;color:#333">έλξη</div>
<div class="a" style="left:1677px;top:1099px;width:57px;height:19px;background:#d8dce4;border:1px solid #8aa0c0"></div>
<div class="a" style="left:1700px;top:1099px;width:1px;height:19px;background:#8aa0c0"></div>
<div class="a" style="left:1735px;top:1099px;width:44px;height:19px;background:#d8dce4;border:1px solid #8aa0c0"></div>
<div class="t" style="left:1679px;top:1103px;font-size:11.5px;color:#333">dxf</div>
<div class="t" style="left:1703px;top:1103px;font-size:11.5px;color:#333">έλξη</div>
<div class="t" style="left:1738px;top:1103px;font-size:11.5px;color:#333">κάθετα</div>
<div class="a" style="left:1790px;top:1108px;width:9px;height:1.5px;background:#888"></div>
<div class="a" style="left:1807px;top:1108px;width:90px;height:1px;background:#bbb"></div>
<div class="a" style="left:1848px;top:1101px;width:6px;height:14px;background:#f4f4f4;border:1px solid #999"></div>
<div class="a" style="left:1902px;top:1108px;width:9px;height:1.5px;background:#888"></div>
<div class="a" style="left:1906px;top:1104px;width:1.5px;height:9px;background:#888"></div><div class="a" style="left:403px;top:670px;width:1px;height:401px;background:#8a8a8a"></div>
<!-- floating window 2 -->
<div class="a" style="left:880px;top:565px;width:877px;height:499px;background:#efefef;border:1px solid #c8c8c8;box-shadow:0 0 6px 2px rgba(0,0,0,0.18)"></div>
<div class="a ph" style="left:881px;top:566px;width:875px;height:40px"></div>
<div class="t ptitle" style="left:887px;top:578px;font-size:21px">Παράθυρο Εργασίας 2</div>
<svg class="a" style="left:1741px;top:582px" width="9" height="9"><path d="M1 1 L8 8 M8 1 L1 8" stroke="#555" stroke-width="1.4"/></svg>
<div class="a" style="left:881px;top:606px;width:875px;height:22px;background:#ececec;border-bottom:1px solid #d8d8d8"></div>
<div class="t tr" style="left:897px;top:610px;font-size:11.3px">Επιλεγμένα</div>
<div class="a" style="left:962px;top:607px;width:30px;height:18px;background:#d2d2d2"></div>
<div class="t tr" style="left:964px;top:610px;font-size:11.3px">Όλα</div>
<div class="a" style="left:884px;top:628px;width:868px;height:413px;background:#fcfcfc"></div>
<div class="a" style="left:884px;top:628px;width:19px;height:400px;background:#efefef"></div>
<div class="a" style="left:884px;top:629px;width:868px;height:17px;background:#efefef"></div>
<svg class="a" style="left:891px;top:634px" width="7" height="7"><path d="M6 0 V6 H0Z" fill="#8a8a8a"/></svg>
<div class="t" style="left:906px;top:631px;font-size:11.6px;font-weight:bold;color:#333;letter-spacing:0.25px">Είδος Έργου - Αποτίμηση/Ενισχύσεις</div>
<div class="a" style="left:903px;top:662px;width:849px;height:1px;background:#ececec"></div>
<div class="a" style="left:1233px;top:646px;width:1px;height:17px;background:#e8e8e8"></div>
<div class="t" style="left:906px;top:649px;font-size:11.5px;color:#3a3a3a;letter-spacing:-0.1px">Επίλυση για Αποτίμηση/Ενισχύσεις Υφιστάμενης Κατασκευής</div>
<div class="a" style="left:1237px;top:650px;width:25px;height:10px;background:#2a55a8;border-radius:5px"></div>
<div class="a" style="left:1251px;top:651px;width:8px;height:7px;background:#fff;border-radius:4px"></div>
<div class="a" style="left:884px;top:663px;width:868px;height:17px;background:#efefef"></div>
<svg class="a" style="left:891px;top:668px" width="7" height="7"><path d="M6 0 V6 H0Z" fill="#8a8a8a"/></svg>
<div class="t" style="left:906px;top:665px;font-size:11.6px;font-weight:bold;color:#333;letter-spacing:0.25px">Οπλισμένο Σκυρόδεμα</div>
<div class="a" style="left:903px;top:696px;width:849px;height:1px;background:#ececec"></div>
<div class="a" style="left:1233px;top:680px;width:1px;height:17px;background:#e8e8e8"></div>
<div class="t" style="left:906px;top:683px;font-size:11.5px;color:#3a3a3a;letter-spacing:-0.1px">Κανονισμός:</div>
<div class="t" style="left:1237px;top:683px;font-size:11.5px;color:#3a3a3a;letter-spacing:-0.1px">ΕΚ8-3</div>
<div class="a" style="left:903px;top:713px;width:849px;height:1px;background:#ececec"></div>
<div class="a" style="left:1233px;top:697px;width:1px;height:17px;background:#e8e8e8"></div>
<div class="t" style="left:906px;top:701px;font-size:11.5px;color:#3a3a3a;letter-spacing:-0.1px">Τιμές Υλικών:</div>
<div class="t" style="left:1237px;top:701px;font-size:11.5px;color:#3a3a3a;letter-spacing:-0.1px">Μέσες Τιμές</div>
<div class="a" style="left:884px;top:714px;width:868px;height:17px;background:#efefef"></div>
<svg class="a" style="left:891px;top:720px" width="7" height="7"><path d="M6 0 V6 H0Z" fill="#8a8a8a"/></svg>
<div class="t" style="left:906px;top:716px;font-size:11.6px;font-weight:bold;color:#333;letter-spacing:0.25px">Φέρουσα Τοιχοποιία</div>
<div class="a" style="left:903px;top:747px;width:849px;height:1px;background:#ececec"></div>
<div class="a" style="left:1233px;top:731px;width:1px;height:17px;background:#e8e8e8"></div>
<div class="t" style="left:906px;top:735px;font-size:11.5px;color:#3a3a3a;letter-spacing:-0.1px">Κανονισμός:</div>
<div class="t" style="left:1237px;top:735px;font-size:11.5px;color:#3a3a3a;letter-spacing:-0.1px">ΚΑΔΕΤ</div>
<div class="a" style="left:903px;top:764px;width:849px;height:1px;background:#ececec"></div>
<div class="a" style="left:1233px;top:748px;width:1px;height:17px;background:#e8e8e8"></div>
<div class="t" style="left:906px;top:751px;font-size:11.5px;color:#3a3a3a;letter-spacing:-0.1px">Κατηγορία συντελεστή γEd:</div>
<div class="t" style="left:1237px;top:751px;font-size:11.5px;color:#3a3a3a;letter-spacing:-0.1px">Χωρίς βλάβες και χωρίς επεμβάσεις</div>
<div class="a" style="left:903px;top:781px;width:849px;height:1px;background:#ececec"></div>
<div class="a" style="left:1233px;top:765px;width:1px;height:17px;background:#e8e8e8"></div>
<div class="t" style="left:948px;top:769px;font-size:11.5px;color:#aaa;letter-spacing:-0.1px">- Συντελεστής γEd:</div>
<div class="t" style="left:1237px;top:769px;font-size:11.5px;color:#aaa;letter-spacing:-0.1px">1.00</div>
<div class="a" style="left:884px;top:782px;width:868px;height:17px;background:#efefef"></div>
<svg class="a" style="left:891px;top:788px" width="7" height="7"><path d="M6 0 V6 H0Z" fill="#8a8a8a"/></svg>
<div class="t" style="left:906px;top:784px;font-size:11.6px;font-weight:bold;color:#333;letter-spacing:0.25px">Επίδοση - Επιτελεστικότητα Κτηρίου</div>
<div class="a" style="left:903px;top:815px;width:849px;height:1px;background:#ececec"></div>
<div class="a" style="left:1233px;top:799px;width:1px;height:17px;background:#e8e8e8"></div>
<div class="t" style="left:906px;top:803px;font-size:11.5px;color:#3a3a3a;letter-spacing:-0.1px">Τιμές Συντελεστών:</div>
<div class="t" style="left:1237px;top:803px;font-size:11.5px;color:#3a3a3a;letter-spacing:-0.1px">Σύμφωνα με τον επιλεγμένο κανονισμό για Φέρουσα Τοιχοποιία</div>
<div class="a" style="left:903px;top:832px;width:849px;height:1px;background:#ececec"></div>
<div class="a" style="left:1233px;top:816px;width:1px;height:17px;background:#e8e8e8"></div>
<div class="t" style="left:906px;top:819px;font-size:11.5px;color:#3a3a3a;letter-spacing:-0.1px">Επίπεδο Επιτελεστικότητας:</div>
<div class="t" style="left:1237px;top:819px;font-size:11.5px;color:#3a3a3a;letter-spacing:-0.1px">Β-Σημαντικές Βλάβες</div>
<div class="a" style="left:903px;top:849px;width:849px;height:1px;background:#ececec"></div>
<div class="a" style="left:1233px;top:833px;width:1px;height:17px;background:#e8e8e8"></div>
<div class="t" style="left:906px;top:837px;font-size:11.5px;color:#3a3a3a;letter-spacing:-0.1px">Περίοδος Επαναφοράς TR:</div>
<div class="t" style="left:1237px;top:837px;font-size:11.5px;color:#3a3a3a;letter-spacing:-0.1px">TR=475 χρόνια - P=10% σε 50 χρόνια</div>
<div class="a" style="left:903px;top:866px;width:849px;height:1px;background:#ececec"></div>
<div class="a" style="left:1233px;top:850px;width:1px;height:17px;background:#e8e8e8"></div>
<div class="t" style="left:906px;top:853px;font-size:11.5px;color:#aaa;letter-spacing:-0.1px">αg/ag,ref=</div>
<div class="t" style="left:1237px;top:853px;font-size:11.5px;color:#aaa;letter-spacing:-0.1px">1.00</div>
<div class="a" style="left:884px;top:867px;width:868px;height:17px;background:#efefef"></div>
<svg class="a" style="left:891px;top:872px" width="7" height="7"><path d="M6 0 V6 H0Z" fill="#8a8a8a"/></svg>
<div class="t" style="left:906px;top:869px;font-size:11.6px;font-weight:bold;color:#333;letter-spacing:0.25px">ΣΑΔ</div>
<div class="a" style="left:903px;top:900px;width:849px;height:1px;background:#ececec"></div>
<div class="a" style="left:1233px;top:884px;width:1px;height:17px;background:#e8e8e8"></div>
<div class="t" style="left:906px;top:887px;font-size:11.5px;color:#3a3a3a;letter-spacing:-0.1px">ΣΑΔ(Γ) - Στάθμη αξιοπιστίας γεωμετρικών δεδομένων:</div>
<div class="t" style="left:1237px;top:887px;font-size:11.5px;color:#3a3a3a;letter-spacing:-0.1px">ΣΑΔ2-Ικανοποιητική στάθμη αξιοπιστίας δεδομένων</div>
<div class="a" style="left:903px;top:917px;width:849px;height:1px;background:#ececec"></div>
<div class="a" style="left:1233px;top:901px;width:1px;height:17px;background:#e8e8e8"></div>
<div class="t" style="left:948px;top:905px;font-size:11.5px;color:#3a3a3a;letter-spacing:-0.1px">- γG=</div>
<div class="t" style="left:1237px;top:905px;font-size:11.5px;color:#3a3a3a;letter-spacing:-0.1px">1.350</div>
<div class="a" style="left:903px;top:934px;width:849px;height:1px;background:#ececec"></div>
<div class="a" style="left:1233px;top:918px;width:1px;height:17px;background:#e8e8e8"></div>
<div class="t" style="left:948px;top:921px;font-size:11.5px;color:#3a3a3a;letter-spacing:-0.1px">- γGe=</div>
<div class="t" style="left:1237px;top:921px;font-size:11.5px;color:#3a3a3a;letter-spacing:-0.1px">1.100</div>
<div class="a" style="left:884px;top:935px;width:868px;height:17px;background:#efefef"></div>
<svg class="a" style="left:891px;top:940px" width="7" height="7"><path d="M6 0 V6 H0Z" fill="#8a8a8a"/></svg>
<div class="t" style="left:906px;top:937px;font-size:11.6px;font-weight:bold;color:#333;letter-spacing:0.25px">Μέθοδος Συντελεστή Συμπεριφοράς</div>
<div class="a" style="left:903px;top:968px;width:849px;height:1px;background:#ececec"></div>
<div class="a" style="left:1233px;top:952px;width:1px;height:17px;background:#e8e8e8"></div>
<div class="t" style="left:906px;top:955px;font-size:11.5px;color:#3a3a3a;letter-spacing:-0.1px">Μέθοδος συντελεστή συμπεριφοράς</div>
<div class="t" style="left:1237px;top:955px;font-size:11.5px;color:#3a3a3a;letter-spacing:-0.1px">m - τοπικοί συντελεστές σεισμικής συμπεριφοράς</div>
<div class="a" style="left:903px;top:985px;width:849px;height:1px;background:#ececec"></div>
<div class="a" style="left:1233px;top:969px;width:1px;height:17px;background:#e8e8e8"></div>
<div class="t" style="left:906px;top:973px;font-size:11.5px;color:#3a3a3a;letter-spacing:-0.1px">Δυσκαμψία Δομικών Στοιχείων:</div>
<div class="t" style="left:1237px;top:973px;font-size:11.5px;color:#3a3a3a;letter-spacing:-0.1px">Ενεργός Δυσκαμψία</div>
<div class="a" style="left:884px;top:986px;width:868px;height:17px;background:#efefef"></div>
<svg class="a" style="left:891px;top:992px" width="7" height="7"><path d="M6 0 V6 H0Z" fill="#8a8a8a"/></svg>
<div class="t" style="left:906px;top:988px;font-size:11.6px;font-weight:bold;color:#333;letter-spacing:0.25px">Δείκτης πλαστιμότητας γωνίας στροφής χορδής</div>
<div class="a" style="left:903px;top:1019px;width:849px;height:1px;background:#ececec"></div>
<div class="a" style="left:1233px;top:1003px;width:1px;height:17px;background:#e8e8e8"></div>
<div class="t" style="left:906px;top:1007px;font-size:11.5px;color:#3a3a3a;letter-spacing:-0.1px">μθ,pl</div>
<div class="t" style="left:1237px;top:1007px;font-size:11.5px;color:#3a3a3a;letter-spacing:-0.1px">2.50</div>
<div class="a" style="left:903px;top:1036px;width:849px;height:1px;background:#ececec"></div>
<div class="a" style="left:1233px;top:1020px;width:1px;height:17px;background:#e8e8e8"></div>
<div class="a" style="left:884px;top:1041px;width:868px;height:1px;background:#cfcfcf"></div>
<div class="a" style="left:884px;top:1042px;width:868px;height:19px;background:#efefef;border-bottom:1px solid #d4d4d4"></div>
</body></html>
